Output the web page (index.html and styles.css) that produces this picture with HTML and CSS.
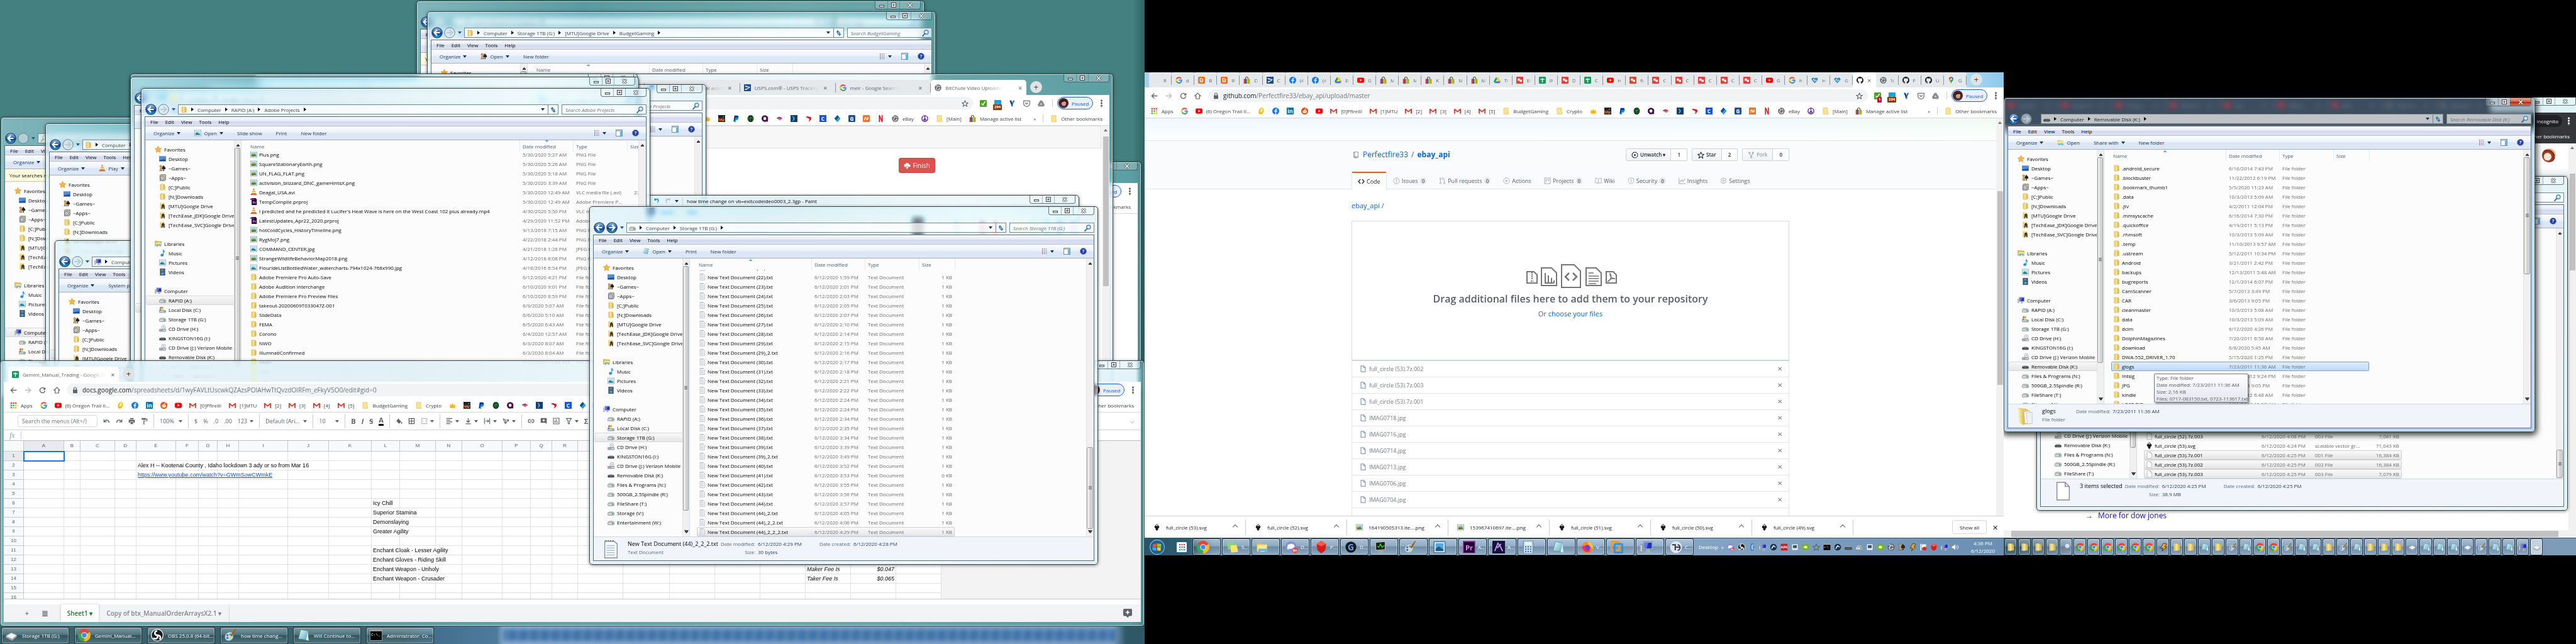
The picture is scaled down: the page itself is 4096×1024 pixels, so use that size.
FILE: index.html
```html
<!DOCTYPE html>
<html lang="en">
<head>
<meta charset="utf-8">
<title>Desktop</title>
<link rel="stylesheet" href="styles.css">
</head>
<body>
<svg class="paints" aria-hidden="true">
<defs>
<linearGradient id="gy" x1="0" x2="1"><stop offset="0" stop-color="#fbeeb0"/><stop offset=".5" stop-color="#f3dc84"/><stop offset="1" stop-color="#d9b64c"/></linearGradient>
<linearGradient id="gb" x1="0" y1="0" x2="0" y2="1"><stop offset="0" stop-color="#9cc3ea"/><stop offset=".48" stop-color="#2a63b5"/><stop offset=".52" stop-color="#0a2f7c"/><stop offset="1" stop-color="#2fb0f0"/></linearGradient>
<linearGradient id="gs" x1="0" y1="0" x2="1" y2="1"><stop offset="0" stop-color="#eafcff"/><stop offset="1" stop-color="#5ba9bb"/></linearGradient>
</defs>
</svg>
<svg class="sprite" aria-hidden="true">
<symbol id="star" viewBox="0 0 16 16"><path d="M8 .5l2.200 5 5.300.5-4 3.600 1.200 5.400L8 12.200 3.300 15l1.200-5.400-4-3.600 5.300-.5z" fill="#fcb93c" stroke="#e08316"/></symbol>
<symbol id="desktop" viewBox="0 0 16 16"><rect x=".5" y="2.500" width="15" height="11" fill="#1c5ec4" stroke="#7a8796"/><path d="M1 3h14v5L1 11z" fill="#4a8fe0"/><path d="M1 12h14v1H1z" fill="#0c2a5c"/></symbol>
<symbol id="games" viewBox="0 0 16 16"><path d="M10 1c1 2 5 4 5 7 0 2-2 3-4 2l1 4H9l1-4H7c-1-4 2-6 3-9z" fill="#222"/><path d="M5 2a2 2 0 012 3l-1 1 1 6 1 2H1l1-2 1-6-1-1a2 2 0 013-3z" fill="#d5a863" stroke="#5c3d14" stroke-width=".7"/></symbol>
<symbol id="apps" viewBox="0 0 16 16"><path d="M2 3l2-2h11v12l-2 2H2z" fill="#a9b1ba" stroke="#555"/><circle cx="7" cy="9" r="4" fill="#dfe7ee" stroke="#666"/><circle cx="7" cy="9" r="1.200" fill="#667"/><path d="M10 2h4v4h-4z" fill="#e7bb35"/></symbol>
<symbol id="folder" viewBox="0 0 16 16"><path d="M2 1h6v14H2z" fill="#e9cd70"/><path d="M5 1l7 .5V14l-7 1.500z" fill="url(#gy)" stroke="#c9a544" stroke-width=".5"/><path d="M12 3l2 .5V14h-3z" fill="#d8b95a"/></symbol>
<symbol id="fopen" viewBox="0 0 16 16"><path d="M2 1l7 .5 3 2V14l-5 1z" fill="#e6c766"/><path d="M7 4l5-.5v10L8 14z" fill="#fff" stroke="#b5b9bd" stroke-width=".4"/><path d="M9 5l5-.5v9.500l-4 .5z" fill="#eef1f3" stroke="#b5b9bd" stroke-width=".4"/><path d="M2 1l5 2.500V15.500l-4-2z" fill="url(#gy)"/></symbol>
<symbol id="gfolder" viewBox="0 0 16 16"><path d="M2 1h6v14H2z" fill="#e9cd70"/><path d="M5 1l7 .5V14l-7 1.500z" fill="url(#gy)"/><path d="M6 5h6l1 3v7h-2l-2-4-2 4H5z" fill="#554a30"/><circle cx="9" cy="6" r="2" fill="#332b1a"/></symbol>
<symbol id="lib" viewBox="0 0 16 16"><path d="M1 2h5l1 1h8v10H1z" fill="#e7c65d" stroke="#b8932e"/><path d="M3 6h12v8H3z" fill="#fbe9a0"/><path d="M4 9h10v6h-2v-3H7v3H4z" fill="#58b4e4"/></symbol>
<symbol id="music" viewBox="0 0 16 16"><path d="M9 0h1.500c0 3 4 3 3 8-.5-2-1.500-3-3-3v7.500a3.600 3 0 11-1.500-2.300z" fill="#2a8be0"/></symbol>
<symbol id="pic" viewBox="0 0 16 16"><rect x=".5" y="1.500" width="15" height="13" fill="#fff" stroke="#8a949e"/><path d="M2.500 3.500h11v9h-11z" fill="#a9dcf5"/><path d="M2.500 9l4-2 7 4v1.500h-11z" fill="#1d7d8c"/></symbol>
<symbol id="video" viewBox="0 0 16 16"><path d="M2 0h12v16H2z" fill="#2b3a44"/><path d="M5 1h6v6H5zM5 8.500h6v6.500H5z" fill="#4aa3dc"/><path d="M6 4l5-1-2 4z" fill="#c1452c"/><path d="M3 1v14M13 1v14" stroke="#dce6ec" stroke-dasharray="1.500 1.500"/></symbol>
<symbol id="comp" viewBox="0 0 16 16"><path d="M0 5h3v9H0z" fill="#c8ced4" stroke="#777" stroke-width=".5"/><path d="M4 1h12v10H4z" fill="#c9d2da" stroke="#6f7a84" stroke-width=".7"/><path d="M5.200 2.200h9.600v7.600H5.200z" fill="#1d2fc0"/><path d="M5.200 2.200h5l-2 7.600h-3z" fill="#5f7be6"/><path d="M8 11h4v3h2v1H6v-1h2z" fill="#aab3bb"/></symbol>
<symbol id="drive" viewBox="0 0 16 16"><path d="M2 7l2-2h8l2 2z" fill="#eceff1" stroke="#888" stroke-width=".6"/><rect x=".5" y="7.500" width="15" height="6" rx="1.500" fill="#d4d8db" stroke="#70777d"/><rect x="10.500" y="9" width="3" height="3" fill="#35b335"/></symbol>
<symbol id="windrive" viewBox="0 0 16 16"><rect x=".5" y="9.500" width="15" height="5" rx="1.500" fill="#c8cdd1" stroke="#70777d"/><rect x="11" y="11" width="3" height="2" fill="#35b335"/><path d="M2 2l3.500-1v4L1.500 6z" fill="#e8572a"/><path d="M6.500 1L10 1.500 9 6l-3-1z" fill="#7cba3c"/><path d="M1 7l4-1v4H.5z" fill="#3e95dd"/><path d="M6 6l3.500.5L9 11l-3-1z" fill="#f7c524"/></symbol>
<symbol id="cd" viewBox="0 0 16 16"><circle cx="10" cy="5" r="4.500" fill="#eef2f5" stroke="#888" stroke-width=".8"/><circle cx="10" cy="5" r="1.300" fill="#9aa"/><rect x=".5" y="9.500" width="15" height="5" rx="1" fill="#d4d8db" stroke="#666"/><path d="M2 12h7" stroke="#555"/></symbol>
<symbol id="usb" viewBox="0 0 16 16"><path d="M2 8l2-2h8l2 2z" fill="#9ea3a8"/><rect x=".5" y="8" width="15" height="5.500" rx="1.500" fill="#3f4347"/><path d="M3 11h10" stroke="#8a9096"/></symbol>
<symbol id="png" viewBox="0 0 16 16"><rect x=".5" y="1.500" width="15" height="13" fill="#fff" stroke="#7f8a94"/><path d="M2.500 3.500h11v9h-11z" fill="#7fc4ee"/><path d="M2.500 8c4-3 6 0 11 1v3.500h-11z" fill="#3e8f35"/><circle cx="6" cy="6.500" r="2" fill="#f2c52c"/><path d="M5 9l4 3.500H4z" fill="#c33823"/></symbol>
<symbol id="vlc" viewBox="0 0 16 16"><path d="M7 0h2l4 12H3z" fill="#f07e12"/><path d="M6 3.500h4l.8 2.500H5.200zM4.500 8h7l.8 2.300H3.700z" fill="#f5f2ee"/><path d="M2 11.500h12l1.500 3.500H.5z" fill="#e96a09"/></symbol>
<symbol id="pr" viewBox="0 0 16 16"><path d="M3 0h9l3 3v13H3z" fill="#2a0634"/><path d="M0 1h9v3H0z" fill="#7d2c9b"/><text x="5" y="13" font-size="8" font-weight="700" font-family="Open Sans,sans-serif" fill="#e58bff">Pr</text></symbol>
<symbol id="txt" viewBox="0 0 16 16"><path d="M3 1.500h8l2.500 2V15.500H3z" fill="#fbfdfe" stroke="#8b959c" stroke-width=".8"/><path d="M4.500 5h7M4.500 7h7M4.500 9h7M4.500 11h7M4.500 13h7" stroke="#a9bfd0" stroke-width=".8"/><path d="M3.500 1h7" stroke="#666" stroke-dasharray="1 1"/></symbol>
<symbol id="blank" viewBox="0 0 16 16"><path d="M3 .5h7l3.500 3.500V15.500H3z" fill="#fff" stroke="#8b8f93" stroke-width=".8"/><path d="M10 .5V4h3.500" fill="none" stroke="#8b8f93" stroke-width=".8"/></symbol>
<symbol id="ink" viewBox="0 0 16 16"><path d="M8 0l5.500 6c1 2-2 2-1 4l-2 1 .5 2-3 3-3-3 .5-2-2-1c1-2-2-2-1-4z" fill="#16181d"/><path d="M8 1.500l3 3.500-2-.5-1 1-1.500-1-1.500.5z" fill="#e8eef7"/></symbol>
<symbol id="mag" viewBox="0 0 16 16"><circle cx="10" cy="6" r="4.500" fill="#e8f4ff" stroke="#4a86c8" stroke-width="2"/><path d="M6.500 9.500L1.500 15" stroke="#2c62a5" stroke-width="2.500" stroke-linecap="round"/></symbol>
<symbol id="magbig" viewBox="0 0 16 16"><circle cx="10" cy="5.500" r="4.500" fill="#d6ebfa" stroke="#9aa7b2" stroke-width="1.200"/><path d="M6.500 9L2 15" stroke="#a8804e" stroke-width="1.800" stroke-linecap="round"/></symbol>
<symbol id="bk" viewBox="0 0 18 18"><circle cx="9" cy="9" r="8.200" fill="url(#gb)" stroke="#30465f" stroke-width="1.200"/><path d="M9 4.500L4.500 9 9 13.500M5 9h8.500" fill="none" stroke="#fff" stroke-width="2.200"/></symbol>
<symbol id="fwoff" viewBox="0 0 18 18"><circle cx="9" cy="9" r="8.200" fill="#dfe9ee" fill-opacity=".55" stroke="#6a7f8c"/><path d="M9 4.500L13.500 9 9 13.500M13 9H4.500" fill="none" stroke="#b9cbd6" stroke-width="2"/></symbol>
<symbol id="fwon" viewBox="0 0 18 18"><circle cx="9" cy="9" r="8.200" fill="url(#gb)" stroke="#30465f" stroke-width="1.200"/><path d="M9 4.500L13.500 9 9 13.500M13 9H4.500" fill="none" stroke="#fff" stroke-width="2.200"/></symbol>
<symbol id="refresh" viewBox="0 0 16 16"><path d="M6 1L2 6h2.500c0 3 1 5 3.500 6-1-2-1-4-1-6h2zM10 15l4-5h-2.500c0-3-1-5-3.500-6 1 2 1 4 1 6H7z" fill="#2e6fc4"/></symbol>
<symbol id="views" viewBox="0 0 16 16"><path d="M3 2.500h2M3 6.200h2M3 9.900h2M3 13.500h2" stroke="#c44" stroke-width="2"/><path d="M7 2.500h3M11 2.500h3M7 6.200h3M11 6.200h3M7 9.900h3M11 9.900h3M7 13.500h3M11 13.500h3" stroke="#4c6a8c"/></symbol>
<symbol id="pane" viewBox="0 0 16 16"><rect x=".5" y="1" width="15" height="14" fill="#fff" stroke="#3d6185"/><path d="M1 3h14" stroke="#3d6185"/><path d="M10 4h5v10.500h-5z" fill="#63b7dd"/></symbol>
<symbol id="help" viewBox="0 0 16 16"><circle cx="8" cy="8" r="7.300" fill="#1b3fae" stroke="#8b9099" stroke-width="1.400"/><text x="8" y="12" text-anchor="middle" font-size="11" font-weight="700" font-family="Open Sans,sans-serif" fill="#fff">?</text></symbol>
<symbol id="google" viewBox="0 0 16 16"><path d="M13.200 4.200A6.400 6.400 0 002.600 5" fill="none" stroke="#ea4335" stroke-width="2.800"/><path d="M2.600 5a6.400 6.400 0 000 6" fill="none" stroke="#fbbc05" stroke-width="2.800"/><path d="M2.600 11a6.400 6.400 0 009.800 2" fill="none" stroke="#34a853" stroke-width="2.800"/><path d="M8 8h6.300a6.400 6.400 0 01-2 5" fill="none" stroke="#4285f4" stroke-width="2.800"/></symbol>
<symbol id="yt" viewBox="0 0 16 16"><rect x="0" y="2" width="16" height="12" rx="3" fill="#f00"/><path d="M6.500 5v6l4.500-3z" fill="#fff"/></symbol>
<symbol id="egg" viewBox="0 0 16 16"><ellipse cx="8" cy="8" rx="5.500" ry="8" transform="rotate(25 8 8)" fill="#f6b70c"/><ellipse cx="9" cy="6.500" rx="3" ry="5" transform="rotate(25 9 6)" fill="#fff08a"/></symbol>
<symbol id="fb" viewBox="0 0 16 16"><circle cx="8" cy="8" r="8" fill="#1877f2"/><path d="M7 16V9.500H5V7h2V5.500C7 3.500 8.200 2.500 10 2.500h1.300v2H10c-.8 0-1 .4-1 1V7h2.300l-.4 2.500H9V16z" fill="#fff"/></symbol>
<symbol id="li" viewBox="0 0 16 16"><rect width="16" height="16" rx="1" fill="#0077b5"/><text x="8" y="13" text-anchor="middle" font-size="13" font-weight="700" font-family="Open Sans,sans-serif" fill="#fff">in</text></symbol>
<symbol id="reddit" viewBox="0 0 16 16"><circle cx="8" cy="8" r="8" fill="#ff4500"/><ellipse cx="8" cy="9.500" rx="5" ry="3.600" fill="#fff"/><circle cx="6" cy="9" r="1.100" fill="#ff4500"/><circle cx="10" cy="9" r="1.100" fill="#ff4500"/><circle cx="10.800" cy="3.500" r="1.200" fill="#fff"/><path d="M8 6l.7-3 2 .5" fill="none" stroke="#fff"/></symbol>
<symbol id="gmail" viewBox="0 0 16 16"><path d="M1 3h14v11H1z" fill="#eee"/><path d="M0 3v11h2.500V6.500L8 11l5.500-4.500V14H16V3h-2L8 8 2 3z" fill="#d8382b"/></symbol>
<symbol id="bfold" viewBox="0 0 16 16"><path d="M3 1h10v9l1 1v4H3z" fill="#fde293" stroke="#e3bd45"/></symbol>
<symbol id="crown" viewBox="0 0 16 16"><path d="M2 14V5l3.500 3L8 3l2.500 5L14 5v9z" fill="#fbb60c"/></symbol>
<symbol id="wu" viewBox="0 0 16 16"><path d="M0 0h16v16H0z" fill="#1c2126"/><path d="M1 7l2 6 1.500-4L6 13l2-6" fill="none" stroke="#f0501e" stroke-width="1.800"/><path d="M9 8v4q2 3 4 0V8" fill="none" stroke="#f8a01c" stroke-width="1.800"/><circle cx="12" cy="4" r="1.600" fill="#2f9be8"/></symbol>
<symbol id="pp" viewBox="0 0 16 16"><path d="M4 1h6c6 0 4 9-2 9H6l-1 5H2z" fill="#003087"/><path d="M6 5h7c2 4-2 7-5 6.500L7 16H4z" fill="#009cde" opacity=".8"/></symbol>
<symbol id="hh" viewBox="0 0 16 16"><ellipse cx="8" cy="8" rx="7" ry="8" fill="#0b1d10"/><path d="M4 3v10M8 1v14M12 3v10M4 8l8-2" stroke="#1f9d3f" stroke-width="1.500"/></symbol>
<symbol id="aa" viewBox="0 0 16 16"><circle cx="7.500" cy="8" r="5.500" fill="none" stroke="#4b0f4f" stroke-width="4"/><path d="M13 4v11" stroke="#4b0f4f" stroke-width="3.500"/></symbol>
<symbol id="boa" viewBox="0 0 16 16"><path d="M1 7l7-3 7 3-6 5z" fill="#e31837"/><path d="M3 9l5-3M6 11l6-3" stroke="#fff"/><path d="M1 7l7-3 1 1-6 3z" fill="#1b4fa8"/></symbol>
<symbol id="dd" viewBox="0 0 16 16"><path d="M0 0h16v16H0z" fill="#103f74"/><path d="M3 2c8 1 9 10 0 12 5-4 5-8 0-12z" fill="#7fb1dc"/></symbol>
<symbol id="sv" viewBox="0 0 16 16"><path d="M1 4l5-1 8 2c2 3-2 9-6 10 2-3 3-6 1-7z" fill="#d9161f"/></symbol>
<symbol id="cb" viewBox="0 0 16 16"><path d="M0 0h16v16H0z" fill="#1652f0"/><text x="8" y="12.500" text-anchor="middle" font-size="12" font-weight="700" font-family="Open Sans,sans-serif" fill="#fff">C</text></symbol>
<symbol id="dia" viewBox="0 0 16 16"><path d="M8 0l7 8-7 8-7-8z" fill="#0b4f8a"/><path d="M8 8l3.500-4L15 8l-7 8-3.500-4z" fill="#22a7e8"/></symbol>
<symbol id="gg" viewBox="0 0 16 16"><rect width="16" height="16" rx="2" fill="#1d4f9c"/><text x="8" y="12.500" text-anchor="middle" font-size="12" font-weight="700" font-family="Open Sans,sans-serif" fill="#fff">G</text></symbol>
<symbol id="nn" viewBox="0 0 16 16"><rect width="16" height="16" rx="2" fill="#f36f21"/><path d="M4 12c0-8 3-8 4-4s4 4 4-4" fill="none" stroke="#fff" stroke-width="2"/></symbol>
<symbol id="nf" viewBox="0 0 16 16"><path d="M3.500 0H6l4 10V0h2.500v16H10L6 6v10H3.500z" fill="#d81f26"/></symbol>
<symbol id="globe" viewBox="0 0 16 16"><circle cx="8" cy="8" r="7.500" fill="#5f6368"/><path d="M3 4c3-2 5 0 4 2s-3 1-3 3 2 2 2 5M10 3c-1 2 0 3 3 3M9 14c0-3 1-4 4-4" fill="none" stroke="#fff" stroke-width="1.500"/></symbol>
<symbol id="peace" viewBox="0 0 16 16"><circle cx="8" cy="8" r="6.700" fill="#fff" stroke="#5a1ca0" stroke-width="2"/><path d="M8 1v14M8 8l-4.500 5M8 8l4.500 5" stroke="#5a1ca0" stroke-width="1.800"/></symbol>
<symbol id="bag" viewBox="0 0 16 16"><path d="M5 6V4a3 3.500 0 016 0v2" fill="none" stroke="#222" stroke-width="1.400"/><path d="M1 5h3.500v11H1z" fill="#e53238"/><path d="M4.500 5H8v11H4.500z" fill="#0064d2"/><path d="M8 5h3.500v11H8z" fill="#f5af02"/><path d="M11.500 5H15v11h-3.500z" fill="#86b817"/></symbol>
<symbol id="blogger" viewBox="0 0 16 16"><rect width="16" height="16" rx="3" fill="#fc6a08"/><path d="M5 4h3a2 2 0 012 2v1h1v2a3 3 0 01-3 3H5z" fill="none" stroke="#fff" stroke-width="1.800"/><path d="M6 9.500h3" stroke="#fff"/></symbol>
<symbol id="usps" viewBox="0 0 16 16"><path d="M0 0h16v16H0z" fill="#1d4d8f"/><path d="M2 3l12 3-1 2-8 5H2l3-5z" fill="#fff"/><path d="M3 6l9 1-7 4z" fill="#1d4d8f"/></symbol>
<symbol id="gd" viewBox="0 0 16 16"><path d="M5.500 1h5L16 10.500h-5z" fill="#fbc02d"/><path d="M5.500 1L0 10.500 2.500 15 8 5.500z" fill="#1e9e5a"/><path d="M5.500 10.500H16L13.500 15h-11z" fill="#4374e0"/></symbol>
<symbol id="rd" viewBox="0 0 16 16"><rect width="16" height="16" rx="1" fill="#db4437"/><path d="M3 4h5v5H3zM8 7h5v5H8z" fill="#fff"/></symbol>
<symbol id="gsh" viewBox="0 0 16 16"><rect width="16" height="16" rx="2" fill="#0f9d58"/><path d="M3 6h10M8 3v10" stroke="#fff" stroke-width="2"/></symbol>
<symbol id="heart" viewBox="0 0 16 16"><path d="M8 15L1.500 8C-1 4 4-.5 8 4c4-4.500 9 0 6.500 4z" fill="#2f86bf"/><path d="M3 8h2l1-3 2 6 1.500-4 1 1.500H13" fill="none" stroke="#fff" stroke-width="1.200"/></symbol>
<symbol id="gh" viewBox="0 0 16 16"><path fill-rule="evenodd" d="M8 0C3.580 0 0 3.580 0 8c0 3.540 2.290 6.530 5.470 7.590.4.070.55-.17.55-.38 0-.19-.01-.82-.01-1.490-2.010.37-2.530-.49-2.690-.94-.09-.23-.48-.94-.82-1.130-.28-.15-.68-.52-.01-.53.63-.01 1.080.58 1.230.82.72 1.210 1.870.87 2.330.66.070-.52.28-.87.51-1.070-1.780-.2-3.640-.89-3.640-3.950 0-.87.31-1.590.82-2.150-.08-.2-.36-1.020.08-2.120 0 0 .67-.21 2.200.82.64-.18 1.320-.27 2-.27s1.360.090 2 .27c1.530-1.040 2.200-.82 2.200-.82.44 1.100.16 1.920.08 2.120.51.56.82 1.270.82 2.150 0 3.070-1.870 3.750-3.650 3.950.29.25.54.73.54 1.480 0 1.070-.01 1.930-.01 2.200 0 .21.15.46.55.38A8 8 0 0016 8c0-4.420-3.580-8-8-8z" fill="#1b1f23"/></symbol>
<symbol id="maps" viewBox="0 0 16 16"><path d="M8 16c-1-5-5-6-5-10.500a5 5.300 0 0110 0C13 10 9 11 8 16z" fill="#34a853"/><path d="M3 6a5 5.300 0 015-5.800V6z" fill="#ea4335"/><path d="M8 .2a5 5.300 0 015 5.800H8z" fill="#4285f4"/><path d="M3 6l5 1-3 4z" fill="#fbbc04"/><circle cx="8" cy="5.500" r="1.800" fill="#fff"/></symbol>
<symbol id="chk" viewBox="0 0 16 16"><rect width="16" height="16" rx="2" fill="#4da22c"/><path d="M4 8l3 3.500L12.500 3" fill="none" stroke="#fff" stroke-width="2.200"/></symbol>
<symbol id="tab294" viewBox="0 0 16 16"><rect width="16" height="11" rx="1" fill="#0aa4ef"/><path d="M2 12l6-3 6 3z" fill="#fff"/></symbol>
<symbol id="vv" viewBox="0 0 16 16"><path d="M2 1l4 0 2 5 2-5 4 0-4.500 8v6h-3V9z" fill="#2b6fc4"/><path d="M2 1h3l3 7-1 7z" fill="#143d7a"/></symbol>
<symbol id="pocket" viewBox="0 0 16 16"><path d="M1 2h14v6a7 7 0 01-14 0z" fill="none" stroke="#70757a" stroke-width="1.800"/><path d="M4.500 6L8 9.500 11.500 6" fill="none" stroke="#70757a" stroke-width="1.800"/></symbol>
<symbol id="ggd" viewBox="0 0 16 16"><path d="M6 1h4l6 10-2 4H2l-2-4z" fill="#888b8e"/><path d="M8 6l3 5H5z" fill="#d5d6d7"/></symbol>
<symbol id="ava" viewBox="0 0 16 16"><circle cx="8" cy="8" r="8" fill="#4b2322"/><ellipse cx="8.500" cy="8" rx="3.600" ry="5" fill="#d69c83"/><path d="M4 8c0-6 8-7 9-1-2-2-5-3-9 1z" fill="#2d1214"/><path d="M3 14c2-3 8-3 10 0a8 8 0 01-10 0z" fill="#3a4250"/></symbol>
<symbol id="sto" viewBox="0 0 16 16"><path d="M8 1.500l2 4.600 5 .4-3.800 3.300 1.200 4.800L8 12l-4.400 2.600 1.200-4.800L1 6.500l5-.4z" fill="none" stroke="#5f6368" stroke-width="1.500"/></symbol>
<symbol id="lock" viewBox="0 0 16 16"><rect x="3" y="6.500" width="10" height="8.500" rx="1" fill="#5f6368"/><path d="M5 7V4.500a3 3 0 016 0V7" fill="none" stroke="#5f6368" stroke-width="1.700"/></symbol>
<symbol id="al" viewBox="0 0 16 16"><path d="M8 2L2 8l6 6M2.500 8H15" fill="none" stroke="#5f6368" stroke-width="1.900"/></symbol>
<symbol id="ar" viewBox="0 0 16 16"><path d="M8 2l6 6-6 6M13.500 8H1" fill="none" stroke="#b6b8ba" stroke-width="1.900"/></symbol>
<symbol id="rl" viewBox="0 0 16 16"><path d="M13 4.500A6 6 0 1014 9" fill="none" stroke="#5f6368" stroke-width="2"/><path d="M15 1v6H9z" fill="#5f6368"/></symbol>
<symbol id="hm" viewBox="0 0 16 16"><path d="M1.500 8L8 1.500 14.500 8H12v6.500H4V8z" fill="none" stroke="#5f6368" stroke-width="1.700"/></symbol>
<symbol id="grid9" viewBox="0 0 16 16"><path d="M1 1h3.500v3.500H1z" fill="#ea4335"/><path d="M6.300 1h3.500v3.500H6.300zM11.500 1H15v3.500h-3.500z" fill="#ea4335"/><path d="M1 6.300h3.500v3.500H1z" fill="#34a853"/><path d="M6.300 6.300h3.500v3.500H6.300z" fill="#4285f4"/><path d="M11.500 6.300H15v3.500h-3.500zM11.500 11.500H15V15h-3.500z" fill="#fbbc05"/><path d="M1 11.500h3.500V15H1z" fill="#34a853"/><path d="M6.300 11.500h3.500V15H6.300z" fill="#fbbc05"/></symbol>
<symbol id="chrome" viewBox="0 0 16 16"><path d="M8 8L1.100 4A8 8 0 0114.900 4z" fill="#ea4335"/><path d="M8 8l6.900-4A8 8 0 018 16z" fill="#fbbc05"/><path d="M8 8v8A8 8 0 011.100 4z" fill="#34a853"/><circle cx="8" cy="8" r="3.800" fill="#fff"/><circle cx="8" cy="8" r="3" fill="#4285f4"/></symbol>
<symbol id="obs" viewBox="0 0 16 16"><circle cx="8" cy="8" r="7.500" fill="#1a1a1c" stroke="#fff"/><path d="M8 8C4 8 4 3 8 2.500M8 8c2 3.500-2 6-5 3.500M8 8c4 0 5 3 3 5.500" fill="none" stroke="#fff" stroke-width="2"/></symbol>
<symbol id="paint" viewBox="0 0 16 16"><path d="M7 4c6-1 7 10 0 11S-1 6 7 4z" fill="#b9def2" stroke="#6b95ad" stroke-width=".6"/><circle cx="4.500" cy="8" r="1.300" fill="#e33"/><circle cx="8" cy="7" r="1.200" fill="#3a3"/><circle cx="4.500" cy="11.500" r="1.300" fill="#36c"/><circle cx="8.500" cy="12" r="1.300" fill="#fc2"/><path d="M15 0l-5 9-1-1z" fill="#d9832b" stroke="#a55a14"/></symbol>
<symbol id="note" viewBox="0 0 16 16"><path d="M5 1l9 1.500L11.500 14 2 12.500z" fill="url(#gs)" stroke="#4a8a99" stroke-width=".6"/><path d="M14 2.500L15 15l-3.500-1z" fill="#dfeff2"/></symbol>
<symbol id="cmd" viewBox="0 0 16 16"><path d="M0 1h16v14H0z" fill="#aaa"/><path d="M.7 3h14.600v11.300H.7z" fill="#000"/><text x="1.500" y="9" font-size="5" font-family="Liberation Mono,monospace" fill="#fff">C:\_</text></symbol>
<symbol id="drv3" viewBox="0 0 16 16"><path d="M1 9l7-4 7 3-6 5z" fill="#f2f4f5" stroke="#999" stroke-width=".5"/><path d="M1 9v2l8 4v-2zM9 13l6-5v2l-6 5z" fill="#9fa6ab"/></symbol>
<symbol id="bolt" viewBox="0 0 16 16"><path d="M9 0l6 2-4 5 3 1-8 8 2-6H3z" fill="#f9a61a" stroke="#222"/></symbol>
<symbol id="orb" viewBox="0 0 16 16"><circle cx="8" cy="8" r="7.600" fill="#1d5f93" stroke="#8cc4e6" stroke-width=".7"/><path d="M3.500 5l4-1v3.500L3 8z" fill="#f0562a"/><path d="M8 4l4.500.8L12 8 8 7.500z" fill="#8cc63f"/><path d="M3 8.500l4-.5v4l-4-1z" fill="#45a5e8"/><path d="M8 8l4 .5-.5 3.500L8 11.500z" fill="#fbc82b"/></symbol>
<symbol id="dotapp" viewBox="0 0 16 16"><rect width="16" height="16" rx="1.500" fill="#fff"/><path d="M4 3h2v2H4zM7.500 3h2v2h-2zM11 3h2v2h-2z" fill="#e33"/><path d="M4 7h2v2H4zM7.500 7h2v2h-2zM11 7h2v2h-2z" fill="#2b7de0"/><path d="M4 11h2v2H4zM7.500 11h2v2h-2zM11 11h2v2h-2z" fill="#2a4"/></symbol>
<symbol id="sticky" viewBox="0 0 16 16"><path d="M1 2l8-1 1 9-8 1z" fill="#8fd07e"/><path d="M5 6l8-1 2 9-9 1z" fill="#f6e75b"/></symbol>
<symbol id="expl" viewBox="0 0 16 16"><path d="M1 3h5l1 1h7v9H1z" fill="#e3bd4a"/><path d="M2 5h12v9H2z" fill="#fbe796"/><path d="M3 10h11v5h-3v-2H6v2H3z" fill="#6ab8e2"/></symbol>
<symbol id="disc" viewBox="0 0 16 16"><circle cx="7" cy="7.500" r="7" fill="#7f90e0"/><path d="M3 5c3-1.500 5-1.500 8 0l1 5-2 1-1-1H5l-1 1-2-1z" fill="#fff"/><circle cx="12" cy="12" r="3.800" fill="#e84545"/><text x="12" y="14" text-anchor="middle" font-size="5" font-weight="700" font-family="Open Sans,sans-serif" fill="#fff">9+</text></symbol>
<symbol id="ruby" viewBox="0 0 16 16"><path d="M8 0l6 4-1 8-5 4-5-4-1-8z" fill="#d81a1a"/><path d="M8 0l6 4-6 3-6-3z" fill="#ff5a4a"/></symbol>
<symbol id="gcirc" viewBox="0 0 16 16"><circle cx="8" cy="8" r="7.500" fill="#16191f" stroke="#9ab"/><text x="8" y="12" text-anchor="middle" font-size="11" font-weight="700" font-family="Open Sans,sans-serif" fill="#5ea6f2">G</text></symbol>
<symbol id="mon" viewBox="0 0 16 16"><path d="M2 2l12-1v10L2 12z" fill="#1c1f1c" stroke="#bbb"/><path d="M4 7l2 1 2-4 2 4 3-2" fill="none" stroke="#3e3"/><path d="M5 13h7v2H5z" fill="#aaa"/></symbol>
<symbol id="photo" viewBox="0 0 16 16"><path d="M1 1h14v14H1z" fill="#dff0fb" stroke="#3f6b93"/><path d="M3 3h10v10H3z" fill="#57a7e0"/><path d="M3 10l4-3 6 4v2H3z" fill="#1d5f88"/></symbol>
<symbol id="prem" viewBox="0 0 16 16"><path d="M0 0h16v16H0z" fill="#24002e"/><path d="M.6.6h14.800v14.800H.6z" fill="none" stroke="#a855c8"/><text x="8" y="12" text-anchor="middle" font-size="9" font-weight="700" font-family="Open Sans,sans-serif" fill="#e58bff">Pr</text></symbol>
<symbol id="ame" viewBox="0 0 16 16"><path d="M0 0h16v16H0z" fill="#1b0f38"/><path d="M3 13L7 3l3 4 3 6M6 9l5-5" fill="none" stroke="#b79bf0" stroke-width="1.500"/></symbol>
<symbol id="calc" viewBox="0 0 16 16"><rect x="2" y="0" width="12" height="16" rx="1" fill="#cfe3f2" stroke="#6d8ea8"/><path d="M4 2h8v3H4z" fill="#eef8e6"/><path d="M4 7.500h8M4 10.500h8M4 13.500h8" stroke="#4c7ba0" stroke-width="1.700" stroke-dasharray="1.700 1.400"/></symbol>
<symbol id="ff" viewBox="0 0 16 16"><circle cx="8" cy="8.500" r="7.300" fill="#ff8a16"/><path d="M8 1c5 1 8 5 7 10-3-6-6-4-7-10z" fill="#ffcd2e"/><circle cx="8" cy="9" r="3.800" fill="#7a3ce0"/><path d="M1 7c1 8 8 9 12 5-5 1-9-1-8-6z" fill="#ee3356"/></symbol>
<symbol id="vm" viewBox="0 0 16 16"><rect x="1" y="1" width="10" height="11" rx="1.500" fill="none" stroke="#f39a1e" stroke-width="2.500"/><rect x="5" y="4" width="10" height="11" rx="1.500" fill="none" stroke="#3a8fd0" stroke-width="2.500"/></symbol>
<symbol id="xx" viewBox="0 0 16 16"><circle cx="8" cy="8" r="7.500" fill="#e4e8ec"/><path d="M3 5h4v7M10 5c4 0 4 7 0 7M8 8h5" fill="none" stroke="#333a55" stroke-width="1.700"/></symbol>
<symbol id="t1" viewBox="0 0 16 16"><path d="M2 2h12v12H2z" fill="#e9eef2"/><path d="M4 4h8v6H4z" fill="#3a5566"/></symbol>
<symbol id="t2" viewBox="0 0 16 16"><circle cx="8" cy="8" r="7" fill="#16324f"/><path d="M4 11l4-6 4 3" fill="none" stroke="#fff" stroke-width="2"/></symbol>
<symbol id="t3" viewBox="0 0 16 16"><path d="M1 2h14v12H1z" fill="#76b900"/><path d="M4 8c2-4 6-4 8 0-2 4-6 4-8 0z" fill="#fff"/></symbol>
<symbol id="t4" viewBox="0 0 16 16"><path d="M8 0C13 0 13 16 8 16S3 0 8 0z" fill="#1463c8"/><path d="M5 5l6 6-3 3V2l3 3-6 6" fill="none" stroke="#fff" stroke-width="1.200"/></symbol>
<symbol id="t5" viewBox="0 0 16 16"><path d="M1 1h14v14H1z" fill="#c81e1e"/><text x="8" y="11" text-anchor="middle" font-size="7" font-weight="700" font-family="Open Sans,sans-serif" fill="#fff">APK</text></symbol>
<symbol id="t6" viewBox="0 0 16 16"><path d="M1 6h3l4-4v12L4 10H1z" fill="#fff"/><path d="M10 5q3 3 0 6M12 3q5 5 0 10" fill="none" stroke="#fff"/></symbol>
<symbol id="t7" viewBox="0 0 16 16"><path d="M2 1h2v14H2zM5 2h9v7H5z" fill="#fff"/><circle cx="11" cy="11" r="4" fill="#d22"/></symbol>
<symbol id="repo" viewBox="0 0 16 16"><path d="M3 1h10v11H3zM5 1v11M3 12v2h2M8 14h5v-2" fill="none" stroke="#8b929a" stroke-width="1.300"/><path d="M5.500 12v4L7 15l1.500 1v-4z" fill="#8b929a"/></symbol>
<symbol id="code" viewBox="0 0 16 16"><path d="M6 3L1.500 8 6 13M10 3l4.500 5-4.500 5" fill="none" stroke="#24292e" stroke-width="2"/></symbol>
<symbol id="issue" viewBox="0 0 16 16"><circle cx="8" cy="8" r="6.800" fill="none" stroke="#a9aeb3" stroke-width="1.400"/><path d="M8 4v5M8 10.500v1.800" stroke="#a9aeb3" stroke-width="1.700"/></symbol>
<symbol id="pull" viewBox="0 0 16 16"><g fill="none" stroke="#a9aeb3" stroke-width="1.400"><circle cx="3.500" cy="3" r="1.700"/><circle cx="3.500" cy="13" r="1.700"/><circle cx="12.500" cy="13" r="1.700"/><path d="M3.500 5v6M12.500 11V5q0-2-2-2H8M10 .5L7.500 3 10 5.500"/></g></symbol>
<symbol id="act" viewBox="0 0 16 16"><circle cx="8" cy="8" r="6.800" fill="none" stroke="#a9aeb3" stroke-width="1.400"/><path d="M6 5v6l5-3z" fill="#a9aeb3"/></symbol>
<symbol id="proj" viewBox="0 0 16 16"><path d="M1.500 1.500h13v13h-13zM5 4v6M8 4v3M11 4v5" fill="none" stroke="#a9aeb3" stroke-width="1.500"/></symbol>
<symbol id="wiki" viewBox="0 0 16 16"><path d="M1 2.500h5.500L8 4l1.500-1.500H15V13H9.500L8 14.500 6.500 13H1zM8 4v10" fill="none" stroke="#a9aeb3" stroke-width="1.300"/></symbol>
<symbol id="sec" viewBox="0 0 16 16"><path d="M8 .8l6 2V8c0 4-3 6-6 7.200C5 14 2 12 2 8V2.800z" fill="none" stroke="#a9aeb3" stroke-width="1.300"/><path d="M8 4v5M8 10.500v1.500" stroke="#a9aeb3" stroke-width="1.500"/></symbol>
<symbol id="ins" viewBox="0 0 16 16"><path d="M1 1v13.500h15M3 11l4-5 3 3 5-6" fill="none" stroke="#a9aeb3" stroke-width="1.500"/></symbol>
<symbol id="gear" viewBox="0 0 16 16"><path d="M8 1l1 2.200 2.400.2L13 2.500l1 2-1.200 2 .2 2 1 2-1.500 2-2.300-.3L8.500 14.500h-2L5.500 12.300l-2.500.2-1-2 1.200-2L3 6.500 2 4.500l1.500-2 2 .8z" fill="none" stroke="#a9aeb3" stroke-width="1.300"/><circle cx="8" cy="8" r="2.300" fill="none" stroke="#a9aeb3" stroke-width="1.300"/></symbol>
<symbol id="eye" viewBox="0 0 16 16"><circle cx="8" cy="8" r="6.500" fill="none" stroke="#24292e" stroke-width="1.600"/><circle cx="8" cy="8" r="2" fill="#24292e"/></symbol>
<symbol id="ghstar" viewBox="0 0 16 16"><path d="M8 1.500l2 4.500 5 .5-3.800 3.300L12.400 15 8 12.200 3.600 15l1.200-5.200L1 6.500 6 6z" fill="none" stroke="#24292e" stroke-width="1.500"/></symbol>
<symbol id="fork" viewBox="0 0 16 16"><g fill="none" stroke="#8f959b" stroke-width="1.400"><circle cx="4" cy="3" r="1.700"/><circle cx="12" cy="3" r="1.700"/><circle cx="8" cy="13" r="1.700"/><path d="M4 5c0 3 4 2 4 6M12 5c0 3-4 2-4 6"/></g></symbol>
<symbol id="file" viewBox="0 0 16 16"><path d="M3 1h6l4 4v10H3z" fill="none" stroke="#6a8fb0" stroke-width="1.500"/><path d="M9 1v4h4" fill="none" stroke="#6a8fb0" stroke-width="1.300"/></symbol>
<symbol id="drop" viewBox="0 0 150 38"><g fill="none" stroke="#767676" stroke-width="2"><path d="M6 12h11l5 5v13H6z"/><path d="M29 6h16l8 8v20H29z"/><path d="M61 1h20l10 10v26H61z"/><path d="M100 6h16l8 8v20h-24z"/><path d="M132 12h11l5 5v13h-16z"/><path d="M14 13v12M12 27h4" stroke-dasharray="2 1"/><path d="M35 30V14M40 30V18M45 30V22M49 30V26M34 30h15"/><path d="M73 14l-6 6 6 6M79 14l6 6-6 6" stroke-width="2.500"/><path d="M104 14h8M104 19h16M104 23h16M104 27h16M104 31h12" stroke-width="1.600"/><path d="M134 28c6-3 7-10 4-13 0 6 4 9 8 8-4-1-9 1-12 5" stroke-width="1.500"/></g></symbol>
<symbol id="undo" viewBox="0 0 16 16"><path d="M2 4v6h6M3 9c4-5 10-4 11 3" fill="none" stroke="#5f6368" stroke-width="2"/></symbol>
<symbol id="redo" viewBox="0 0 16 16"><path d="M14 4v6H8M13 9C9 4 3 5 2 12" fill="none" stroke="#5f6368" stroke-width="2"/></symbol>
<symbol id="pundo" viewBox="0 0 16 16"><path d="M2 1v6h6L5.500 5c4-1 6 2 3 9 6-5 6-13-5-11z" fill="#1f8fd6"/></symbol>
<symbol id="predo" viewBox="0 0 16 16"><path d="M14 1v6H8l2.500-2c-4-1-6 2-3 9-6-5-6-13 5-11z" fill="#aebdca"/></symbol>
<symbol id="print" viewBox="0 0 16 16"><path d="M4 1h8v3H4zM1 5h14v7h-3V9H4v3H1zM5 10h6v5H5z" fill="#5f6368"/></symbol>
<symbol id="roller" viewBox="0 0 16 16"><path d="M2 1h10v4H2zM13 2h2v6H8v8H6V7h7z" fill="#5f6368"/></symbol>
<symbol id="fill" viewBox="0 0 16 16"><path d="M6 2l7 7-5 5-6-6z" fill="#5f6368"/><path d="M14 10q2 3 0 4t0-4z" fill="#5f6368" stroke="#5f6368"/></symbol>
<symbol id="bord" viewBox="0 0 16 16"><path d="M2 2h12v12H2zM8 2v12M2 8h12" fill="none" stroke="#5f6368" stroke-width="1.800"/></symbol>
<symbol id="merge" viewBox="0 0 16 16"><path d="M2 6V2h12v4M2 10v4h12v-4M1 8h5M15 8h-5" fill="none" stroke="#b7b9bc" stroke-width="1.800"/></symbol>
<symbol id="align" viewBox="0 0 16 16"><path d="M1 2h14M1 6h9M1 10h14M1 14h9" stroke="#5f6368" stroke-width="1.800"/></symbol>
<symbol id="valign" viewBox="0 0 16 16"><path d="M2 14.500h12M8 1v10M4 7l4 4 4-4" fill="none" stroke="#5f6368" stroke-width="1.800"/></symbol>
<symbol id="wrap" viewBox="0 0 16 16"><path d="M2 1v14M14 1v14M4 8h7M9 5l3 3-3 3" fill="none" stroke="#5f6368" stroke-width="1.600"/></symbol>
<symbol id="rot" viewBox="0 0 16 16"><path d="M2 3l4 10 2-7zM7 14l7-9M10 5h4v4" fill="none" stroke="#5f6368" stroke-width="1.600"/></symbol>
<symbol id="lnk" viewBox="0 0 16 16"><path d="M7 4.500H5a3.500 3.500 0 000 7h2M9 4.500h2a3.500 3.500 0 010 7H9M5 8h6" fill="none" stroke="#5f6368" stroke-width="1.700"/></symbol>
<symbol id="cmt" viewBox="0 0 16 16"><path d="M1 1h14v14l-3-3H1z" fill="#5f6368"/><path d="M8 3.500v6M5 6.500h6" stroke="#fff" stroke-width="1.800"/></symbol>
<symbol id="chart" viewBox="0 0 16 16"><path d="M1.500 1.500h13v13h-13zM5 12V7M8 12V4M11 12V9" fill="none" stroke="#5f6368" stroke-width="1.600"/></symbol>
<symbol id="filt" viewBox="0 0 16 16"><path d="M2 2h12L9.500 8v6h-3V8z" fill="none" stroke="#5f6368" stroke-width="1.700"/></symbol>
<symbol id="list" viewBox="0 0 16 16"><path d="M2 3h12M2 6.500h12M2 10h12M2 13.500h12" stroke="#5f6368" stroke-width="2"/></symbol>
<symbol id="explore" viewBox="0 0 16 16"><path d="M2 0h12a2 2 0 012 2v9a2 2 0 01-2 2h-3l-3 3-3-3H2a2 2 0 01-2-2V2a2 2 0 012-2z" fill="#5f6368"/><path d="M8 2l1.300 3.200L12.500 6.500 9.300 7.800 8 11 6.700 7.800 3.500 6.500l3.200-1.300z" fill="#fff"/></symbol>
<symbol id="cloud" viewBox="0 0 16 16"><path d="M4 11a3.500 3.500 0 010-7 4.500 4.500 0 018.500 1A3 3 0 0113 11h-2L8 8l-3 3zM8 9l3 3.500H9V16H7v-3.500H5z" fill="#fff"/></symbol>
</svg>
<div class="screens">
<section class="screen screen-left" id="left" aria-label="Left display"></section>
<section class="screen screen-mid" id="mid" aria-label="Middle display"></section>
<section class="screen screen-right" id="right" aria-label="Right display"></section>
</div>
<script src="app.js"></script>
</body>
</html>
```
FILE: styles.css
```css
:root {
  --ui: "Open Sans", "Noto Sans", sans-serif;
  --frame: 5px;
  --row: 15px;
}
* { box-sizing: border-box; }
body { margin: 0; background: #000; font: 8px/15px var(--ui); color: #000; overflow: hidden; }
button, input, select { font: inherit; color: inherit; border: 0; padding: 0; margin: 0; background: none; appearance: none; }
a { color: inherit; text-decoration: none; }
ul { list-style: none; margin: 0; padding: 0; }
table { border-collapse: collapse; border-spacing: 0; }
th { font-weight: 400; text-align: left; }
th, td { padding: 0; }
.paints { position: absolute; width: 0; height: 0; }
.sprite { display: none; }
.ico { width: 11px; height: 11px; flex: none; display: block; }
.ico-lg { width: 20px; height: 20px; }
.ico-xl { width: 30px; height: 30px; }
.grow { flex: 1; }

.screens { display: grid; grid-template-columns: 1820fr 1366fr 910fr; height: 100vh; }
.screen { position: relative; overflow: hidden; }
.screen-left { background: linear-gradient(90deg, #43807f 99%, #2f6360); }
.screen-mid { margin: 115px 0 141px; background: #fff; display: flex; flex-direction: column; }
.screen-right { margin: 155px 0 141px; background: #fff; display: flex; flex-direction: column; }

/* windows */
.win { position: absolute; display: flex; flex-direction: column; padding: 0 var(--frame) var(--frame); border: 1px solid #33454d; border-radius: 5px; box-shadow: inset 0 0 0 1px rgba(255,255,255,.65), 0 1px 5px rgba(0,0,0,.5); background: linear-gradient(100deg, rgba(195,232,245,.45), rgba(135,195,220,.25) 30%, rgba(200,235,245,.28) 70%, rgba(130,200,225,.25)); backdrop-filter: blur(4px) brightness(1.12); }
.win-a { inset: 186px 920px 390px 1px; }
.win-b { inset: 196px 920px 390px 72px; }
.win-c { inset: 382px 920px 390px 87px; }
.win-d1 { inset: 117px 806px 390px 207px; }
.win-d2 { inset: 122px 804px 390px 207px; }
.win-e { inset: 140px 786px 380px 224px; }
.win-f0 { inset: 1px 350px 600px 662px; }
.win-f { inset: 18px 332px 600px 679px; }
.win-g { inset: 117px 50px 380px 405px; }
.win-h { inset: 134px 697px 400px 330px; }
.win-j { inset: 257px 5px 400px 451px; }
.win-p { inset: 310px 104px 400px 1018px; }
.win-s { inset: 573px 0 28px 0; }
.win-z { inset: 328px 74px 126px 937px; }
.win-l { inset: 125px 13px 71px 52px; }
.win-k { inset: 0 65px 196px 0; box-shadow: inset 0 0 0 1px rgba(255,255,255,.75), 0 2px 10px 3px rgba(0,0,0,.75); background: linear-gradient(rgba(70,95,120,.5) 0, rgba(70,95,120,.5) 40px, #bfdcf6 60px, #b4d6f6); }

.controls { align-self: flex-end; display: flex; height: 13px; border: 1px solid rgba(60,75,85,.75); border-top: 0; border-radius: 0 0 4px 4px; background: rgba(255,255,255,.2); flex: none; }
.controls button { width: 19px; display: flex; align-items: center; justify-content: center; }
.controls button + button { border-left: 1px solid rgba(60,75,85,.4); }
.controls .close { width: 33px; }
.controls svg { width: 12px; height: 10px; }
.win-k .controls .close { background: linear-gradient(#e9a99a, #cf5a44 50%, #b02c16 52%, #dc6a4c); border-radius: 0 0 4px 0; }

.head { height: 44px; flex: none; display: flex; flex-direction: column; }
.addr-row { display: flex; align-items: center; margin: 11px 0 0 1px; height: 18px; }
.round { width: 18px; height: 18px; margin-right: 2px; display: block; flex: none; }
.round svg { width: 18px; height: 18px; display: block; }
.dd { width: 0; height: 0; border: 3px solid transparent; border-top: 4px solid #17335e; border-bottom: 0; flex: none; }
.addr-row > .dd { margin: 0 4px 0 2px; border-top-color: #1c5c9c; }
.addr, .search { height: 16px; border: 1px solid #6f8890; background: rgba(255,255,255,.72); display: flex; align-items: center; }
.win-k .addr, .win-k .search { background: rgba(204,206,208,.92); }
.addr { flex: 1; padding-left: 3px; color: #3c4246; min-width: 0; }
.win-k .addr { color: #16181a; }
.addr ol { list-style: none; display: flex; align-items: center; gap: 6px; margin: 0; padding: 0 0 0 6px; white-space: nowrap; }
.addr li { display: flex; align-items: center; gap: 6px; }
.addr li::before { content: ""; border: 3px solid transparent; border-left: 4px solid #000; border-right: 0; }
.addr .dd { margin: 0 5px 0 auto; }
.addr .go { height: 14px; width: 16px; border-left: 1px solid #6f8890; display: grid; place-items: center; }
.search { width: 135px; margin-left: 5px; padding: 0 4px 0 5px; flex: none; }
.search input { flex: 1; min-width: 0; font-style: italic; }
.search input::placeholder { color: #6a6f73; opacity: 1; }
.client { flex: 1; min-height: 0; border: 1px solid #5b6c78; background: #fcfcfc; display: flex; flex-direction: column; overflow: hidden; }
.menu { height: 15px; flex: none; display: flex; gap: 11px; padding-left: 8px; line-height: 15px; background: linear-gradient(#fbfcfe, #e7ebf6 45%, #d3daed 55%, #dde3f2); border-bottom: 1px solid #b6bfd0; }
.tools { height: 22px; flex: none; display: flex; align-items: center; gap: 22px; padding: 0 11px 0 13px; color: #1e395b; background: linear-gradient(#fcfeff, #eaf1fa 48%, #dce6f4 52%, #dce7f5); border-bottom: 1px solid #a0afc3; }
.tools button { display: flex; align-items: center; gap: 4px; white-space: nowrap; }
.tools .right { margin-left: auto; display: flex; gap: 15px; }
.tip { height: 20px; flex: none; background: #ffffe1; padding-left: 7px; line-height: 20px; border-bottom: 1px solid #c8c8a8; white-space: nowrap; }
.body { flex: 1; min-height: 0; display: flex; }
.nav { width: 141px; flex: none; overflow: hidden; padding-top: 7px; }
.nav li { height: var(--row); white-space: nowrap; padding-left: 21px; margin-left: 1px; }
.nav li.top { padding-left: 14px; }
.nav a { display: flex; align-items: center; gap: 4px; height: 15px; }
.nav li.on { border: 1px solid #d8d8d8; border-right: 0; border-radius: 2px 0 0 2px; background: linear-gradient(#f8f8f8, #e6e6e6); padding-left: 20px; }
.nav li.top.on { padding-left: 13px; }
.nav li.on a { height: 13px; }

.sb { width: 12px; flex: none; display: flex; flex-direction: column; background: #f0f0f0; border-left: 1px solid #e4e4e4; }
.sb::before, .sb::after { content: ""; height: 12px; flex: none; }
.sb::before { background: conic-gradient(from 140deg at 50% 4px, #444 80deg, transparent 0) center/7px 8px no-repeat; }
.sb::after { background: conic-gradient(from -40deg at 50% 5px, #444 80deg, transparent 0) center/7px 8px no-repeat; }
.track { flex: 1; position: relative; }
.thumb { position: absolute; left: 0; right: 1px; border: 1px solid #9b9b9b; border-radius: 2px; background: linear-gradient(90deg, #f5f5f5, #e0e0e0 45%, #cdcdcd 55%, #d8d8d8); display: grid; place-items: center; }
.thumb::after { content: ""; width: 5px; height: 6px; background: repeating-linear-gradient(#666 0 1px, transparent 1px 2px); }
.nav + .sb { border-right: 1px solid #d5dfea; }

.files { --cols: 194px 85px 86px 57px; flex: 1; min-width: 0; display: flex; flex-direction: column; overflow: hidden; white-space: nowrap; }
.files.wide { --cols: 443px 85px 86px 57px; }
.files thead, .files tbody { display: block; }
.files tr { display: grid; grid-template-columns: var(--cols); }
.files thead { height: 18px; flex: none; color: #4c607a; }
.files th { height: 18px; line-height: 20px; padding-left: 4px; border-right: 1px solid #e2e9f1; }
.files th:first-child { padding-left: 14px; }
.files:not(.wide) th:first-child { background: conic-gradient(from 130deg at 50% 0, #6fa3c4 100deg, transparent 0) 50% 1px/7px 3px no-repeat; }
.files.wide th:nth-child(2) { background: conic-gradient(from -50deg at 50% 3px, #6fa3c4 100deg, transparent 0) 50% 0/7px 3px no-repeat; }
.files tbody { flex: 1; min-height: 0; display: flex; flex-direction: column; overflow: hidden; }
.files tbody.end { justify-content: flex-end; }
.files tbody.cut tr:first-child { margin-top: -3px; }
.files tbody.air { padding-top: 4px; }
.files tbody tr { height: var(--row); flex: none; }
.files td { color: #6d6d6d; padding-left: 4px; height: 15px; overflow: hidden; }
.files td:first-child { color: #000; display: flex; align-items: center; gap: 3px; padding-left: 14px; overflow: visible; }
.files td:last-child { text-align: right; padding: 0 5px 0 0; }
.files tr.sel, .files tr.pick { margin-left: 11px; width: 410px; grid-template-columns: 182px 85px 86px 55px; border-radius: 2px; }
.files tr.sel td, .files tr.pick td { height: 13px; line-height: 13px; }
.files tr.sel td:first-child, .files tr.pick td:first-child { padding-left: 2px; }
.files tr.sel td:last-child { padding-right: 3px; }
.files tr.sel { border: 1px solid #d0d0d0; background: linear-gradient(#fafafa, #e5e5e5); }
.files tr.pick { border: 1px solid #7da2ce; background: linear-gradient(#dcebfc, #c1dbfc); }

.details { flex: none; height: 38px; border-top: 1px solid #ccd9ea; background: #f1f5fb; display: flex; padding: 4px 0 0 12px; gap: 12px; color: #5a6779; white-space: nowrap; }
.details dl { display: grid; grid-template-columns: auto auto auto auto auto; grid-auto-rows: 13px; column-gap: 4px; margin: 0; line-height: 13px; }
.details dt, .details dd { margin: 0; }
.details .nm { font-size: 9px; color: #000; }
.details .lab { text-align: right; }
.details .lab2 { padding-left: 24px; }
.details .val { color: #1e395b; }
.details.short dl { column-gap: 3px; }
.details.short .lab2 { padding-left: 14px; }
.details.tall { height: 44px; padding-left: 20px; }

/* browser */
.chrome-top { flex: none; display: flex; flex-direction: column; }
.strip { height: 24px; display: flex; align-items: stretch; flex: none; padding-left: 7px; }
.tab { flex: 1 1 0; min-width: 0; display: flex; align-items: center; gap: 6px; padding: 0 0 0 6px; background: #e6e9ec; color: #5f6368; position: relative; overflow: hidden; white-space: nowrap; }
.tab::after { content: ""; width: 1px; height: 15px; background: #8d9296; margin-left: auto; flex: none; }
.tab .t { overflow: hidden; flex: 0 1 auto; min-width: 0; -webkit-mask: linear-gradient(90deg, #000 70%, transparent); }
.tab .x { margin-left: auto; padding-right: 6px; }
.tab.x-on::after { margin-left: 0; }
.tab.active { background: #fff; border-radius: 5px 5px 0 0; }
.tab.active::after { display: none; }
.plus { width: 19px; height: 19px; border-radius: 10px; background: #dfe3e6; color: #444; margin: 2px 0 0 6px; font-size: 13px; line-height: 17px; text-align: center; flex: none; }
.bar { height: 26px; flex: none; background: #fff; display: flex; align-items: center; gap: 12px; padding: 0 11px 0 10px; }
.pill { flex: 1; height: 20px; border-radius: 10px; background: #f1f3f4; display: flex; align-items: center; gap: 6px; padding: 0 8px 0 8px; margin: 0 -2px; }
.pill .url { flex: 1; color: #70757a; font-size: 10px; }
.pill .url b { font-weight: 400; color: #202124; }
.ext { position: relative; }
.ext em { position: absolute; left: -2px; top: 7px; font: 700 6px/9px var(--ui); color: #fff; background: #8a3b10; padding: 0 2px; border-radius: 1px; }
.ext em.red { left: 5px; background: #c8102e; }
.vr { width: 1px; height: 12px; background: #c8cbce; flex: none; }
.who { height: 20px; width: 57px; flex: none; border: 1px solid #1a5fd0; border-radius: 10px; background: #e8f0fe; color: #1a5fc8; display: flex; align-items: center; gap: 5px; padding-left: 1px; margin-left: -5px; }
.who svg { width: 16px; height: 16px; }
.dots { width: 3px; height: 13px; background: radial-gradient(circle, #5f6368 1px, transparent 2px) 0 0/3px 4px; flex: none; }
.marks { height: 23px; flex: none; display: flex; align-items: center; gap: 11px; background: #fff; border-bottom: 1px solid #d6d9dc; padding: 0 11px 0 10px; color: #3c4043; white-space: nowrap; }
.marks .run { display: flex; gap: 12px; min-width: 0; flex: 1; overflow: hidden; }
.marks a { display: flex; align-items: center; gap: 6px; flex: none; height: 15px; }
.win.browser { padding-bottom: 6px; }
.win.browser .controls { margin-bottom: -4px; }
.page { flex: 1; min-height: 0; background: #fff; display: flex; overflow: hidden; }
.flat { width: 12px; background: #f1f1f1; flex: none; position: relative; }
.flat .thumb { border: 0; border-radius: 0; background: #c1c1c1; left: 2px; right: 1px; }
.flat .thumb::after { display: none; }
.flat::before { content: ""; position: absolute; left: 3px; top: 5px; border: 3px solid transparent; border-bottom: 4px solid #777; border-top: 0; }

.bitchute { flex: 1; }
.bitchute .band { height: 36px; background: #f7f7f7; border: 1px solid #e0e0e0; margin-right: 1px; }
.bitchute .finish { display: flex; gap: 3px; align-items: center; justify-content: center; width: 58px; height: 24px; margin: 15px 0 0 1018px; background: #d9534f; border: 1px solid #d43f3a; border-radius: 3px; color: #fff; font-size: 10px; }

/* paint */
.paint-title { height: 17px; display: flex; align-items: center; gap: 6px; padding-left: 15px; line-height: 20px; }
.paint-title .controls { margin-left: auto; align-self: flex-start; }
.paint-tabs { height: 12px; background: #d9f2f6; margin-top: 2px; color: #1b4fa0; display: flex; gap: 18px; padding-left: 8px; font-weight: 700; border-left: 17px solid #12357a; }
.ribbon { height: 40px; background: #e2f8fb; display: flex; align-items: center; gap: 11px; padding-left: 426px; }
.ribbon i { width: 11px; height: 22px; opacity: .5; }
.ribbon i:first-child { width: 22px; height: 34px; margin-right: 36px; opacity: .8; }

/* sheet */
.sheet { flex: 1; min-width: 0; display: flex; flex-direction: column; background: #fff; }
.sbar { height: 28px; display: flex; align-items: center; flex: none; gap: 9px; padding: 0 10px 0 22px; border-bottom: 1px solid #d0d2d5; color: #5f6368; font-size: 9px; }
.sbar input { width: 127px; height: 19px; border: 1px solid #dadce0; border-radius: 3px; padding-left: 6px; }
.sbar input::placeholder { color: #70757a; opacity: 1; }
.sbar .pair { display: flex; align-items: center; gap: 4px; }
.sbar .pair::after, .pick-one::after { content: ""; border: 3px solid transparent; border-top: 4px solid #5f6368; border-bottom: 0; }
.pick-one { display: flex; align-items: center; }
.w-zoom { width: 30px; }
.w-font { width: 60px; }
.w-size { width: 26px; }
.sbar b { font-size: 11px; }
.sbar .ul { border-bottom: 3px solid #000; line-height: 12px; }
.sbar .vr { height: 22px; }
.fx { height: 17px; flex: none; border-bottom: 1px solid #c0c0c0; display: flex; align-items: center; gap: 9px; padding-left: 9px; font: italic 12px/16px "Liberation Serif", serif; color: #9aa0a6; }
.grid-wrap { flex: 1; min-height: 0; overflow: hidden; display: flex; background: #f3f3f3; border-bottom: 1px solid #c9c9c9; }
.grid { table-layout: fixed; width: 1491px; flex: none; align-self: flex-start; font: 9px/14px "Liberation Sans", Arial, sans-serif; background: #fff; border-collapse: separate; }
.grid th, .grid td { height: 15px; border-right: 1px solid #e1e1e1; border-bottom: 1px solid #e1e1e1; white-space: nowrap; vertical-align: bottom; padding-left: 2px; }
.grid th { background: #f8f9fa; text-align: center; color: #5f6368; font-size: 8px; padding: 0; border-color: #c8c8c8; }
.grid thead th { height: 17px; vertical-align: middle; }
.grid .hot { background: #e8eaed; }
.grid .cur { outline: 1px solid #1a73e8; border: 1px solid #1a73e8; }
.grid td span, .grid td a { background: #fff; }
.grid td a { color: #1155cc; text-decoration: underline; }
.grid .rt { text-align: right; padding-right: 2px; }
.grid em { font-style: italic; }
.col-head { width: 32px; }
.hbar { height: 8px; flex: none; background: #fff; }
.sfoot { height: 28px; flex: none; background: #f1f3f4; display: flex; align-items: center; gap: 20px; padding: 0 14px 0 34px; color: #5f6368; font-size: 10px; font-weight: 600; }
.sfoot .cur-tab { background: #fff; color: #188038; height: 28px; padding: 0 10px; box-shadow: 0 0 3px rgba(0,0,0,.25); }
.sfoot .other { color: #80868b; border-right: 1px solid #dadce0; height: 28px; padding-right: 12px; margin-left: -8px; }
.sfoot .ico-lg { width: 14px; height: 18px; }

/* task bars */
.taskbar { display: flex; align-items: center; flex: none; height: 28px; color: #fff; }
.screen-left .taskbar { position: absolute; inset: auto 0 0 0; gap: 8px; padding-left: 2px; background: linear-gradient(90deg, #3a626d 0, #3a626d 640px, #44718f 700px, #4d7b9b 790px, #86a8cc 800px, #7e9ec0 1770px, #2f5866 1790px); }
.screen-left .taskbar::after { content: ""; flex: 1; height: 18px; margin: 0 45px 0 102px; background: repeating-linear-gradient(95deg, #4577ac 0 5px, #5f8bbb 7px 9px, #3f71a8 11px 17px); filter: blur(3px); }
.task { height: 27px; width: 108px; display: flex; align-items: center; gap: 7px; padding: 0 5px; border: 1px solid rgba(15,30,38,.85); border-radius: 3px; box-shadow: inset 0 0 0 1px rgba(255,255,255,.4); background: linear-gradient(rgba(255,255,255,.35), rgba(255,255,255,.12) 45%, rgba(0,0,0,.12) 50%, rgba(255,255,255,.12)); white-space: nowrap; flex: none; }
.screen-mid .taskbar { background: linear-gradient(90deg, #26566b, #305e72 70px, #7c9db8 110px, #88a7c6 60%, #6a8fb3); padding-left: 8px; gap: 2px; border-top: 1px solid #33506a; }
.screen-mid .task { width: 45px; gap: 4px; padding: 0 6px; }
.screen-mid .orb { width: 24px; height: 24px; }
.screen-mid .launch { width: 16px; height: 18px; margin: 0 7px 0 17px; }
.tray { display: flex; align-items: center; gap: 5px; margin-left: 6px; }
.tray .ico { width: 12px; height: 14px; }
.clock { margin: 0 14px 0 auto; text-align: center; line-height: 12px; flex: none; }
.screen-right .taskbar { background: linear-gradient(90deg, #35566a, #7897b4 12%, #7d9bbb 80%, #7e9bb8); gap: 2px; padding-left: 1px; border-top: 1px solid #33506a; }
.screen-right .task { width: 20px; padding: 0 3px; }
.screen-right .task .ico { width: 13px; height: 18px; }
.screen-right .task:last-child { background: rgba(255,255,255,.55); }

/* middle display */
.mid-strip { display: flex; background: linear-gradient(90deg, #a9cdeb, #d5f2f7 90%, #8cc8ec); }
.mid-strip .strip { flex: 1; }
.mid-strip .tab:not(.active) { border-radius: 4px 4px 0 0; }
.mid-strip .plus { margin-right: 36px; }
.mid-strip .controls { align-self: flex-start; margin-right: 2px; }
.gh { flex: 1; min-width: 0; font-size: 9px; color: #586069; display: flex; flex-direction: column; overflow: hidden; }
.gh .hero { height: 36px; flex: none; background: linear-gradient(rgba(255,255,255,0), #fff), linear-gradient(90deg, #eef6fe, #eef8fb 70%, #f0fbf3); border-bottom: 1px solid #e1e4e8; }
.wrap { width: 51.4%; min-width: 696px; margin: 0 auto; }
.repo { flex: none; background: #fafbfc; border-bottom: 1px solid #e1e4e8; height: 77px; }
.repo .wrap { display: flex; flex-direction: column; justify-content: space-between; height: 77px; padding-top: 12px; }
.repo .line { display: flex; align-items: center; gap: 7px; font-size: 9px; }
.repo h1 { font-size: 12px; line-height: 20px; font-weight: 400; margin: 0 auto 0 0; padding-left: 1px; display: flex; align-items: center; gap: 5px; color: #0366d6; }
.repo h1 i { color: #586069; font-style: normal; }
.repo h1 .ico { width: 12px; }
.cnt { display: flex; border: 1px solid #cdd0d4; border-radius: 2px; height: 20px; line-height: 18px; color: #24292e; font-weight: 600; font-size: 8px; overflow: hidden; }
.cnt button { display: flex; align-items: center; gap: 3px; padding: 0 8px; background: linear-gradient(#fafbfc, #eff3f6); border-right: 1px solid #cdd0d4; }
.cnt button:disabled { color: #9a9fa4; }
.cnt a { padding: 0 10px; background: #fff; }
.tabs { display: flex; height: 29px; margin-bottom: -1px; }
.tabs a { display: flex; align-items: center; gap: 3px; padding: 0 10px; }
.tabs a.on { background: #fff; color: #24292e; border: 1px solid #e1e4e8; border-top: 2px solid #e36209; border-bottom: 0; padding: 0 9px; border-radius: 2px 2px 0 0; }
.tabs small { font-size: 8px; font-weight: 600; background: #e4e6e8; border-radius: 6px; padding: 0 3px; line-height: 11px; }
.crumb { font-size: 11px; line-height: 18px; margin: 17px 0 15px; }
.crumb a, .dropbox a { color: #0366d6; }
.dropbox { height: 223px; border: 1px solid #d8dade; border-bottom: 2px solid #d1d5da; padding-top: 68px; text-align: center; }
.dropbox svg { width: 150px; height: 38px; display: block; margin: 0 auto; }
.dropbox h2 { font-size: 16px; line-height: 24px; margin: 5px 0 3px; font-weight: 600; color: #5c6065; }
.dropbox p { font-size: 11px; line-height: 18px; margin: 0; }
.ups li { height: 26px; border: 1px solid #e1e4e8; border-top: 0; display: flex; align-items: center; gap: 4px; padding: 0 10px 0 12px; color: #75797d; }
.ups li:last-child { height: 40px; }
.ups button { margin-left: auto; font-size: 10px; }
.shelf { height: 35px; flex: none; border-top: 1px solid #d0d3d6; background: #fff; display: flex; align-items: center; color: #202124; }
.shelf .dl { width: 161px; height: 25px; border-right: 1px solid #c9cccf; display: flex; align-items: center; gap: 9px; padding: 0 13px 0 14px; white-space: nowrap; }
.shelf .up { margin-left: auto; width: 6px; height: 6px; border: solid #5f6368; border-width: 1px 0 0 1px; transform: rotate(45deg); }
.shelf .all { margin-left: auto; width: 55px; height: 22px; border: 1px solid #d5d8db; border-radius: 3px; }
.shelf .cl { margin: 0 9px 0 9px; font-size: 11px; }

/* right display */
.incog-strip { display: flex; height: 24px; flex: none; background: #dff4f6; }
.incog-strip .tab { background: #2b3440; color: #c7ccd1; flex: 0 0 86px; }
.incog-strip .controls { margin-left: auto; align-self: flex-start; }
.incog-bar { height: 49px; flex: none; background: #35363a; color: #fff; display: grid; grid-template-rows: 26px 23px; justify-items: end; align-items: center; padding-right: 10px; }
.incog-bar div { display: flex; align-items: center; gap: 9px; }
.incog-bar .chip { background: #202124; border-radius: 10px; height: 19px; line-height: 19px; padding: 0 6px 0 40px; }
.incog-bar .dots { filter: brightness(3); }
.search-page { flex: 1; min-height: 0; display: flex; }
.search-body { flex: 1; display: flex; flex-direction: column; }
.me { width: 22px; height: 22px; border-radius: 11px; margin: 8px 20px 8px auto; background: radial-gradient(circle at 40% 60%, #f6e6d6 30%, #a8492e 34%, #7a2616 60%, #e7b08c 62%); }
.map { height: 15px; background: linear-gradient(#fff, #e6e8ea); }
.more { margin: auto 0 14px 130px; font-size: 12px; line-height: 18px; color: #1a0dab; display: flex; gap: 8px; align-items: center; }
.hscroll { height: 12px; flex: none; background: #f1f1f1; padding: 1px 28px 1px 12px; display: flex; }
.hscroll i { flex: 1; background: #c1c1c1; }
.tooltip { position: absolute; left: 239px; top: 439px; width: 150px; height: 46px; border: 1px solid #767676; border-radius: 2px; background: linear-gradient(#fff, #e4e5f0); box-shadow: 2px 2px 3px rgba(0,0,0,.4); color: #575757; line-height: 11px; padding: 0 3px; white-space: nowrap; }
```
FILE: app.js
```js
const ico = (id, cls = '') => `<svg class="ico ${cls}" aria-hidden="true"><use href="#${id}"/></svg>`;

const controls = () => `<div class="controls">
<button aria-label="Minimize"><svg viewBox="0 0 12 10"><rect x="2.500" y="5.500" width="7" height="2.500" fill="#fff" stroke="#444"/></svg></button>
<button aria-label="Maximize"><svg viewBox="0 0 12 10"><rect x="2.500" y="1.500" width="7" height="7" fill="#fff" stroke="#444"/><rect x="5" y="4" width="2" height="2" fill="none" stroke="#444"/></svg></button>
<button class="close" aria-label="Close"><svg viewBox="0 0 12 10"><path d="M3 2l6 6.500M9 2L3 8.500" stroke="#444" stroke-width="3"/><path d="M3 2l6 6.500M9 2L3 8.500" stroke="#fff" stroke-width="1.400"/></svg></button></div>`;

const scroll = (top, height) => `<div class="sb"><div class="track">${height ? `<div class="thumb" style="top:${top}%;height:${height}%"></div>` : ''}</div></div>`;

const NAV = [
  ['Favorites', 'star', 1], ['Desktop', 'desktop'], ['~Games~', 'games'], ['~Apps~', 'apps'], ['[C;]Public', 'folder'], ['[N;]Downloads', 'folder'],
  ['[MTU]Google Drive', 'gfolder'], ['[TechEase_JDK]Google Drive', 'gfolder'], ['[TechEase_SVC]Google Drive', 'gfolder'], null,
  ['Libraries', 'lib', 1], ['Music', 'music'], ['Pictures', 'pic'], ['Videos', 'video'], null,
  ['Computer', 'comp', 1], ['RAPID (A:)', 'drive'], ['Local Disk (C:)', 'windrive'], ['Storage 1TB (G:)', 'drive'], ['CD Drive (H:)', 'cd'],
  ['KINGSTON16G (I:)', 'usb'], ['CD Drive (J:) Verizon Mobile', 'cd'], ['Removable Disk (K:)', 'usb'], ['Files & Programs (N:)', 'drive'],
  ['500GB_2.5Spindle (R:)', 'drive'], ['FileShare (T:)', 'drive'], ['Storage (V:)', 'drive'], ['Entertainment (W:)', 'drive'], null, ['Network', 'globe', 1],
];

const nav = on => `<ul class="nav">${NAV.map((n, i) => n
  ? `<li class="${n[2] ? 'top' : ''} ${i === on ? 'on' : ''}"><a href="#">${ico(n[1])}${n[0].replace('&', '&amp;')}</a></li>`
  : '<li></li>').join('')}</ul>`;

const files = (rows, wide, mode) => `<table class="files ${wide ? 'wide' : ''}"><thead><tr><th>Name</th><th>Date modified</th><th>Type</th><th>Size</th></tr></thead>
<tbody class="${mode || ''}">${rows.map(r => `<tr class="${r[5] || ''}"><td>${ico(r[0])}${r[1]}</td><td>${r[2]}</td><td>${r[3]}</td><td>${r[4] || ''}</td></tr>`).join('')}</tbody></table>`;

const explorer = o => `<article class="win ${o.cls}">
<div class="head">${controls()}
<div class="addr-row"><button class="round" aria-label="Back"><svg><use href="#bk"/></svg></button><button class="round" aria-label="Forward"><svg><use href="#${o.fwd ? 'fwon' : 'fwoff'}"/></svg></button><i class="dd"></i>
<div class="addr">${ico(o.icon)}<ol>${o.path.map(p => `<li>${p}</li>`).join('')}<li></li></ol><i class="dd"></i><button class="go" aria-label="Refresh">${ico('refresh')}</button></div>
<div class="search"><input aria-label="Search" placeholder="${o.search}">${ico('mag')}</div></div></div>
<div class="client"><nav class="menu"><a>File</a><a>Edit</a><a>View</a><a>Tools</a><a>Help</a></nav>
<div class="tools"><button>Organize <i class="dd"></i></button>${o.tools.map(t => `<button>${t[1] ? ico(t[1]) : ''}${t[0]}${t[2] ? ' <i class="dd"></i>' : ''}</button>`).join('')}
<div class="right"><button aria-label="Views">${ico('views')} <i class="dd"></i></button><button aria-label="Preview pane">${ico('pane')}</button><button aria-label="Help">${ico('help')}</button></div></div>
${o.tip ? `<div class="tip">${o.tip}</div>` : ''}
<div class="body">${nav(o.on)}${scroll(...(o.navBar || [0, 90]))}${files(o.rows || [], o.wide, o.mode)}${scroll(...(o.listBar || []))}</div>
${o.details || ''}</div></article>`;

/* browser parts */
const MARKS = [['Apps', 'grid9'], ['', 'google'], ['(6) Oregon Trail II...', 'yt'], ['', 'egg'], ['', 'fb'], ['', 'li'], ['', 'reddit'], ['', 'yt'],
  ['[0]PfireIII', 'gmail'], ['[1]MTU', 'gmail'], ['[2]', 'gmail'], ['[3]', 'gmail'], ['[4]', 'gmail'], ['[5]', 'gmail'], ['BudgetGaming', 'bfold'], ['Crypto', 'bfold'],
  ['', 'crown'], ['', 'wu'], ['', 'pp'], ['', 'hh'], ['', 'aa'], ['', 'boa'], ['', 'dd'], ['', 'sv'], ['', 'cb'], ['', 'dia'], ['', 'gg'], ['', 'nn'], ['', 'nf'],
  ['eBay', 'globe'], ['', 'peace'], ['[Main]', 'bfold'], ['Manage active list', 'bag']];
const link = ([t, i]) => `<a href="#" ${t ? '' : `aria-label="${i}"`}>${ico(i)}${t}</a>`;
const marks = `<nav class="marks"><div class="run">${MARKS.map(link).join('')}</div><span>»</span><span class="vr"></span>${link(['Other bookmarks', 'bfold'])}</nav>`;
const bar = (host, path, badge) => `<div class="bar">${ico('al')}${ico('ar')}${ico('rl')}${ico('hm')}
<div class="pill">${ico('lock')}<span class="url"><b>${host}</b>${path}</span>${ico('sto')}</div>
<span class="ext">${ico('chk')}${badge ? '<em class="red">1</em>' : ''}</span><span class="ext">${ico('tab294')}<em>294</em></span>${ico('vv')}${ico('pocket')}${ico('ggd')}<span class="vr"></span>
<button class="who">${ico('ava')}Paused</button><i class="dots"></i></div>`;
const tab = (t, i, cls = '', x) => `<div class="tab ${cls} ${x ? 'x-on' : ''}">${i ? ico(i) : '<span class="ico"></span>'}<span class="t">${t}</span>${x ? '<span class="x">✕</span>' : ''}</div>`;

/* left display */
const S = 'PNG File';
const adobe = [
  ['png', 'Plus.png', '5/30/2020 5:27 AM', S], ['png', 'SquareStationaryEarth.png', '5/30/2020 5:26 AM', S], ['png', 'UN_FLAG_FLAT.png', '5/30/2020 5:18 AM', S],
  ['png', 'activision_blizzard_DNC_gameHintsX.png', '5/30/2020 3:39 AM', S], ['vlc', 'Deagal_USA.avi', '5/30/2020 12:49 AM', 'VLC media file (.avi)', '233,512 KB'],
  ['pr', 'TempCompile.prproj', '5/30/2020 12:49 AM', 'Adobe Premiere P...'], ['vlc', "I predicted and he predicted it Lucifer's Heat Wave is here on the West Coast 102 plus already.mp4", '4/30/2020 5:50 PM', 'VLC media file (.mp4)'],
  ['pr', 'LatestUpdates_Apr22_2020.prproj', '4/29/2020 11:52 PM', 'Adobe Premiere P...'], ['png', 'hotColdCycles_HistoryTImeline.png', '9/13/2018 7:15 AM', S],
  ['png', 'RygMoj7.png', '4/22/2018 2:44 PM', S], ['pic', 'COMMAND_CENTER.jpg', '4/21/2018 1:28 PM', 'JPEG image'], ['png', 'StrangeWildlifeBehaviorMap2018.png', '4/12/2018 8:08 PM', S],
  ['pic', 'FlourideListBottledWater_watercharts-794x1024-768x990.jpg', '4/18/2016 6:54 PM', 'JPEG image'],
  ...[['Adobe Premiere Pro Auto-Save', '6/12/2020 4:21 PM'], ['Adobe Audition Interchange', '6/10/2020 9:01 PM'], ['Adobe Premiere Pro Preview Files', '6/10/2020 8:59 PM'],
    ['takeout-20200609T033047Z-001', '6/9/2020 5:07 AM'], ['SlideData', '6/6/2020 5:10 AM'], ['FEMA', '6/5/2020 6:43 AM'], ['Corono', '6/4/2020 12:57 AM'], ['NWO', '6/3/2020 8:07 AM'],
    ['IllumnatiConfirmed', '6/3/2020 8:04 AM'], ['Music', '5/31/2020 12:44 AM'], ['Admin', '5/30/2020 4:29 PM'], ['Maps', '5/30/2020 5:12 AM']].map(f => ['folder', f[0], f[1], 'File folder']),
];
const texts = '21|1:30 22|1:59 23|2:01 24|2:03 25|2:05 26|2:07 27|2:10 28|2:14 29|2:15 29_2|2:16 30|2:17 31|2:18 32|2:21 33|2:22 34|2:24 35|2:24 36|2:34 37|2:35 38|3:34 39|3:39 39_2|3:49 40|3:52 41|3:53 42|3:55 43|3:56 44|3:57 44_2|4:05 44_2_2|4:06 44_2_2_2|4:29'
  .split(' ').map(s => {
    const [n, time] = s.split('|');
    return ['txt', `New Text Document (${n.slice(0, 2)})${n.slice(2)}.txt`, `6/12/2020 ${time} PM`, 'Text Document', n === '41' ? '0 KB' : '1 KB', n === '44_2_2_2' ? 'sel' : ''];
  });

const open = [['Open', 'pic', 1], ['Slide show'], ['Print'], ['New folder']];
const widths = [64, 26, 55, 34, 63, 36, 30, 34, 78, 65, 68, 45, 57, 42, 64, 45, 34, 41, 72, 74, 72, 72, 72, 72, 72, 72];
const cells = {
  E2: '<span>Alex H -- Kootenai County , Idaho lockdown 3 ady or so from Mar 16</span>', E3: '<a href="#">https://www.youtube.com/watch?v=GWmSowCWmkE</a>',
  L6: 'Icy Chill', L7: '<span>Superior Stamina</span>', L8: '<span>Demonslaying</span>', L9: '<span>Greater Agility</span>', L11: '<span>Enchant Cloak - Lesser Agility</span>',
  L12: '<span>Enchant Gloves - Riding Skill</span>', L13: '<span>Enchant Weapon - Unholy</span>', L14: '<span>Enchant Weapon - Crusader</span>',
  X13: '<em>Maker Fee Is</em>', Y13: '<em>$0.047</em>', X14: '<em>Taker Fee Is</em>', Y14: '<em>$0.065</em>',
};
const letters = [...'ABCDEFGHIJKLMNOPQRSTUVWXYZ'];
const grid = `<table class="grid"><colgroup><col class="col-head">${widths.map(w => `<col style="width:${w}px">`).join('')}</colgroup>
<thead><tr><th></th>${letters.map(l => `<th class="${l === 'A' ? 'hot' : ''}">${l}</th>`).join('')}</tr></thead><tbody>
${Array.from({ length: 16 }, (_, r) => `<tr><th class="${r ? '' : 'hot'}">${r + 1}</th>${letters.map(l => `<td class="${l === 'Y' ? 'rt' : ''} ${l === 'A' && !r ? 'cur' : ''}">${cells[l + (r + 1)] || ''}</td>`).join('')}</tr>`).join('')}</tbody></table>`;
const dd = id => `<span class="pair">${ico(id)}</span>`;
const vr = '<span class="vr"></span>';
const choose = (label, cls, v) => `<span class="pick-one"><select class="${cls}" aria-label="${label}"><option>${v}</option></select></span>`;
const sheetBar = `<div class="sbar"><input aria-label="Search the menus" placeholder="Search the menus (Alt+/)">${ico('undo')}${ico('redo')}${ico('print')}${ico('roller')}${vr}
${choose('Zoom', 'w-zoom', '100%')}${vr}<span>$</span><span>%</span><span>.0</span><span>.00</span><span class="pair">123</span>${vr}${choose('Font', 'w-font', 'Default (Ari...')}${vr}${choose('Size', 'w-size', '10')}${vr}
<b>B</b><b><i>I</i></b><b><s>S</s></b><b class="ul">A</b>${vr}${ico('fill')}${ico('bord')}${dd('merge')}${vr}${dd('align')}${dd('valign')}${dd('wrap')}${dd('rot')}${vr}${ico('lnk')}${ico('cmt')}${ico('chart')}${dd('filt')}<b>Σ</b><span class="grow"></span><span>⌵</span></div>`;

const browser = (cls, tabs, host, path, page, tail) => `<article class="win browser ${cls}">${controls()}
<div class="chrome-top"><div class="strip">${tabs}<button class="plus" aria-label="New tab">+</button><span style="width:${tail}px"></span></div>${bar(host, path)}${marks}</div><div class="page">${page}</div></article>`;

document.getElementById('left').innerHTML = [
  browser('win-j', tab('New Tab', 'globe', 'active'), '', '', '', 800),
  explorer({ cls: 'win-f0', icon: 'magbig', path: ['Search Results in Computer'], search: 'back_1.jpg', tools: [], tip: 'Your searches might be slow' }),
  explorer({ cls: 'win-f', icon: 'folder', path: ['Computer', 'Storage 1TB (G:)', '[MTU]Google Drive', 'BudgetGaming'], search: 'Search BudgetGaming', tools: [['Open', 'games', 1], ['New folder']] }),
  browser('win-g', tab('Home', 'globe', '', 1) + tab('Messages', 'globe', '', 1) + tab('Orders', 'bag', '', 1) + tab('Inbox', 'gmail', '', 1) + tab('PayPal: your personal account', 'pp', '', 1) + tab('USPS.com® - USPS Tracking', 'usps', '', 1) + tab('meir - Google Search', 'google', '', 1) + tab('BitChute Video Uploader', 'globe', 'active', 1), '', '',
    `<div class="bitchute"><div class="band"></div><button class="finish">${ico('cloud')}Finish</button></div><div class="flat"><div class="thumb" style="top:17px;height:238px"></div></div>`, 107),
  explorer({ cls: 'win-h', icon: 'folder', path: ['Computer'], search: 'Search Adobe Projects', tools: open }),
  explorer({ cls: 'win-a', icon: 'magbig', path: ['Search Results in Computer'], search: 'Search', tools: [], tip: 'Your searches might be slow because some locations are not indexed', on: 15 }),
  explorer({ cls: 'win-b', icon: 'folder', path: ['Computer', 'Storage 1TB (G:)'], search: 'Search', tools: [['Play', 'vlc', 1]], on: 18 }),
  explorer({ cls: 'win-c', icon: 'comp', path: ['Computer'], search: 'Search Computer', tools: [['System properties']], on: 15 }),
  explorer({ cls: 'win-d1', icon: 'folder', path: ['Computer'], search: 'Search', tools: open }),
  explorer({ cls: 'win-d2', icon: 'folder', path: ['Computer', 'Storage 1TB (G:)'], search: 'Search Storage 1TB (G:)', tools: open, on: 18 }),
  `<article class="win win-p"><div class="paint-title">${ico('pundo')}${ico('predo')}<i class="dd"></i>${vr}<span>how time change on vb=exitcodeideo0003_2.3gp - Paint</span>${controls()}</div>
  <div class="paint-tabs"><span>Home</span><span>View</span></div><div class="ribbon">${['#222', '#7f7f7f', '#c3c3c3', '#880015', '#ed1c24', '#ffaec9', '#fff200', '#8fe03c', '#22b1e8', '#3f48cc', '#a349a4'].map(c => `<i style="background:${c}"></i>`).join('')}</div><div class="client"></div></article>`,
  explorer({ cls: 'win-e', icon: 'folder', path: ['Computer', 'RAPID (A:)', 'Adobe Projects'], search: 'Search Adobe Projects', tools: open, on: 16, rows: adobe, wide: true, mode: 'cut' }),
  browser('win-s', tab('Gemini_Manual_Trading - Google Sheets', 'gsh', 'active', 1), 'docs.google.com', '/spreadsheets/d/1wyFAVLtUscwkQZAzsPOIAHwTtQvzdOIRFm_eFkyV5O0/edit#gid=0',
    `<div class="sheet">${sheetBar}<div class="fx">fx${vr}</div><div class="grid-wrap">${grid}</div><div class="hbar"></div>
    <div class="sfoot"><span>+</span>${ico('list')}<button class="cur-tab">Sheet1 ▾</button><button class="other">Copy of btx_ManualOrderArraysX2.1 ▾</button><span class="grow"></span>${ico('explore', 'ico-lg')}</div></div>`, 1600),
  explorer({ cls: 'win-z', fwd: 1, icon: 'drive', path: ['Computer', 'Storage 1TB (G:)'], search: 'Search Storage 1TB (G:)', tools: [['Open', 'note', 1], ['Print'], ['New folder']], on: 18, rows: texts, mode: 'end', navBar: [0, 93], listBar: [69, 31],
    details: `<footer class="details">${ico('txt', 'ico-xl')}<dl><dt class="nm">New Text Document (44)_2_2_2.txt</dt><dt class="lab">Date modified:</dt><dd class="val">6/12/2020 4:29 PM</dd><dt class="lab2">Date created:</dt><dd class="val">6/12/2020 4:28 PM</dd><dd>Text Document</dd><dt class="lab">Size:</dt><dd class="val">30 bytes</dd></dl></footer>` }),
  `<footer class="taskbar">${[['drv3', 'Storage 1TB (G:)'], ['chrome', 'Gemini_Manual...'], ['obs', 'OBS 25.0.8 (64-bit...'], ['paint', 'how time chang...'], ['note', 'Will Continue to...'], ['cmd', 'Administrator: Co...']].map(t => `<button class="task">${ico(t[0], 'ico-lg')}${t[1]}</button>`).join('')}</footer>`,
].join('');

/* middle display */
const midTabs = [['R', ''], ['d', 'google'], ['By', 'blogger'], ['IR', 'blogger'], ['D', 'bag'], ['C', 'usps'], ['(4', 'fb'], ['(4', 'fb'], ['En', 'gd'], ['G', 'yt'], ['M', 'bag'], ['M', 'bag'], ['Ki', 'bag'], ['M', 'bag'], ['M', 'bag'],
  ['Tr', 'gd'], ['El', 'rd'], ['IN', 'gsh'], ['D', 'rd'], ['C', 'gsh'], ['H', 'yt'], ['fu', 'rd'], ['C', 'rd'], ['C', 'rd'], ['C', 'rd'], ['C', 'rd'], ['C', 'rd'], ['G', 'yt'], ['h', 'google'], ['H', 'heart'], ['G', 'heart'],
  ['✕', 'gh', 'active'], ['1(', 'globe'], ['P', 'gh'], ['U', 'gh'], ['G', 'maps']];
const uploads = ['full_circle (53).7z.002', 'full_circle (53).7z.003', 'full_circle (53).7z.001', 'IMAG0718.jpg', 'IMAG0716.jpg', 'IMAG0714.jpg', 'IMAG0713.jpg', 'IMAG0706.jpg', 'IMAG0704.jpg'];
const downloads = [['full_circle (53).svg', 'ink'], ['full_circle (52).svg', 'ink'], ['164190505313.ite....png', 'png'], ['153967410697.ite....png', 'png'], ['full_circle (51).svg', 'ink'], ['full_circle (50).svg', 'ink'], ['full_circle (49).svg', 'ink']];
const apps = [['chrome'], ['sticky', 'S...'], ['expl'], ['disc', 'D...'], ['ruby', 'P...'], ['gcirc', 'D...'], ['mon'], ['paint'], ['photo'], ['prem', 'A...'], ['ame', 'A...'], ['calc'], ['note'], ['ff', 'V...'], ['vm'], ['comp'], ['xx', 'C...']];
const tray = ['disc', 'obs', 't4', 'comp', 't2', 't5', 't1', 't3', 'sto', 'cmd', 't2', 'usb', 'drive', 't1', 't3', 'globe', 'games', 'bolt', 't7', 'ruby', 'comp', 't6'];

document.getElementById('mid').innerHTML = `
<div class="mid-strip"><div class="strip">${midTabs.map(t => tab(t[0], t[1], t[2])).join('')}<button class="plus" aria-label="New tab">+</button></div>${controls()}</div>
${bar('github.com', '/Perfectfire33/ebay_api/upload/master', 1)}${marks}
<div class="page"><main class="gh"><div class="hero"></div>
<header class="repo"><div class="wrap"><div class="line"><h1>${ico('repo')}<a href="#">Perfectfire33</a><i>/</i><a href="#"><b>ebay_api</b></a></h1>
<div class="cnt"><button>${ico('eye')}Unwatch ▾</button><a href="#">1</a></div><div class="cnt"><button>${ico('ghstar')}Star</button><a href="#">2</a></div><div class="cnt"><button disabled>${ico('fork')}Fork</button><a href="#">0</a></div></div>
<nav class="tabs"><a class="on" href="#">${ico('code')}Code</a><a href="#">${ico('issue')}Issues <small>0</small></a><a href="#">${ico('pull')}Pull requests <small>0</small></a><a href="#">${ico('act')}Actions</a><a href="#">${ico('proj')}Projects <small>0</small></a><a href="#">${ico('wiki')}Wiki</a><a href="#">${ico('sec')}Security <small>0</small></a><a href="#">${ico('ins')}Insights</a><a href="#">${ico('gear')}Settings</a></nav></div></header>
<div class="wrap"><p class="crumb"><a href="#">ebay_api</a> /</p>
<div class="dropbox"><svg aria-hidden="true"><use href="#drop"/></svg><h2>Drag additional files here to add them to your repository</h2><p>Or <a href="#">choose your files</a></p></div>
<ul class="ups">${uploads.map(u => `<li>${ico('file')}${u}<button aria-label="Remove ${u}">✕</button></li>`).join('')}<li></li></ul></div></main>
<div class="flat"><div class="thumb" style="top:116px;height:308px"></div></div></div>
<div class="shelf">${downloads.map(d => `<div class="dl">${ico(d[1])}${d[0]}<i class="up"></i></div>`).join('')}<button class="all">Show all</button><button class="cl" aria-label="Close">✕</button></div>
<footer class="taskbar">${ico('orb', 'orb')}${ico('dotapp', 'launch')}${apps.map(a => `<button class="task">${ico(a[0], 'ico-lg')}${a[1] || ''}</button>`).join('')}
<div class="tray"><span>Desktop</span><span>»</span>${tray.map(t => ico(t)).join('')}</div><div class="clock">4:36 PM<br>6/12/2020</div></footer>`;

/* right display */
const removable = '.android_secure|6/16/2014 7:43 PM,.blockbuster|11/22/2012 6:19 PM,.bookmark_thumb1|5/5/2020 11:23 AM,.data|10/3/2013 5:09 AM,.jtv|4/2/2011 12:04 PM,.mmsyscache|6/16/2014 7:30 PM,.quickoffice|4/19/2011 5:13 PM,.rhmsoft|10/3/2013 5:09 AM,.temp|11/10/2013 9:57 AM,.ustream|5/12/2011 10:34 PM,Android|3/21/2011 2:42 PM,backups|12/13/2011 5:48 AM,bugreports|12/1/2014 6:07 PM,CamScanner|5/7/2013 3:49 PM,CAR|3/6/2013 9:05 PM,cleanmaster|10/3/2013 5:08 AM,data|10/3/2013 5:09 AM,dcim|6/12/2020 4:26 PM,DolphinMagazines|7/20/2011 6:58 AM,download|6/8/2020 5:45 AM,DWA-552_DRIVER_1.70|5/15/2020 1:25 PM,glogs|7/23/2011 11:36 AM,Intsig|10/17/2012 9:24 PM,JPG|3/6/2013 9:05 PM,kindle|3/28/2012 6:48 AM,LOST.DIR|1/11/2013 12:07 AM'
  .split(',').map(s => { const [n, d] = s.split('|'); return ['folder', n, d, 'File folder', '', n === 'glogs' ? 'pick' : '']; });
const parts = [['blank', 'full_circle (52).7z.002', '6/12/2020 4:08 PM', '002 File', '16,384 KB'], ['blank', 'full_circle (52).7z.003', '6/12/2020 4:08 PM', '003 File', '7,081 KB'], ['ink', 'full_circle (53).svg', '6/12/2020 4:24 PM', 'scalable vector gr...', '71,043 KB'],
  ['blank', 'full_circle (53).7z.001', '6/12/2020 4:25 PM', '001 File', '16,384 KB', 'sel'], ['blank', 'full_circle (53).7z.002', '6/12/2020 4:25 PM', '002 File', '16,384 KB', 'sel'], ['blank', 'full_circle (53).7z.003', '6/12/2020 4:25 PM', '003 File', '7,079 KB', 'sel']];
const rightTasks = 'folder folder folder folder magbig chrome chrome chrome chrome chrome chrome bolt folder folder note folder paint note chrome chrome paint note note folder paint note folder folder folder drv3 note note note drv3 paint note note comp drv3'.split(' ');

document.getElementById('right').innerHTML = `
<div class="incog-strip">${['YouTube', 'Simon and', 'Trump -', 'Show Me', 'This', 'Market', 'DJIA', 'New Tab', 'dow jones'].map((t, i) => tab(t, i < 7 ? 'yt' : 'google', '', 1)).join('')}${controls()}</div>
<div class="incog-bar"><div><span class="chip">Incognito</span><i class="dots"></i></div><a href="#">Other bookmarks</a></div>
<div class="search-page"><div class="search-body"><div class="me"></div><div class="map"></div><a class="more" href="#"><span>→</span>More for dow jones</a></div><div class="flat"><div class="thumb" style="top:48px;height:154px"></div></div></div>
<div class="hscroll"><i></i></div>
<footer class="taskbar">${rightTasks.map(t => `<button class="task" aria-label="${t}">${ico(t)}</button>`).join('')}</footer>
${explorer({ cls: 'win-l', icon: 'folder', path: ['Computer'], search: '', tools: [['Open', 'pic']], rows: parts, mode: 'end', listBar: [91, 12],
    details: `<footer class="details tall">${ico('blank', 'ico-xl')}<dl><dt class="nm">3 items selected</dt><dt class="lab">Date modified:</dt><dd class="val">6/12/2020 4:25 PM</dd><dt class="lab2">Date created:</dt><dd class="val">6/12/2020 4:25 PM</dd><dd></dd><dt class="lab">Size:</dt><dd class="val">38.9 MB</dd></dl></footer>` })}
${explorer({ cls: 'win-k', icon: 'usb', path: ['Computer', 'Removable Disk (K:)'], search: 'Search Removable Disk (K:)', tools: [['Open', 'expl'], ['Share with', '', 1], ['New folder']], on: 22, rows: removable, mode: 'air', navBar: [0, 86], listBar: [0, 49],
    details: `<footer class="details short">${ico('fopen', 'ico-xl')}<dl><dt class="nm">glogs</dt><dt class="lab2">Date modified:</dt><dd class="val">7/23/2011 11:36 AM</dd><dd></dd><dd></dd><dd>File folder</dd></dl></footer>` })}
<div class="tooltip" role="tooltip">Type: File folder<br>Date modified: 7/23/2011 11:36 AM<br>Size: 2.16 KB<br>Files: 0717-083150.txt, 0723-113617.txt</div>`;
```
